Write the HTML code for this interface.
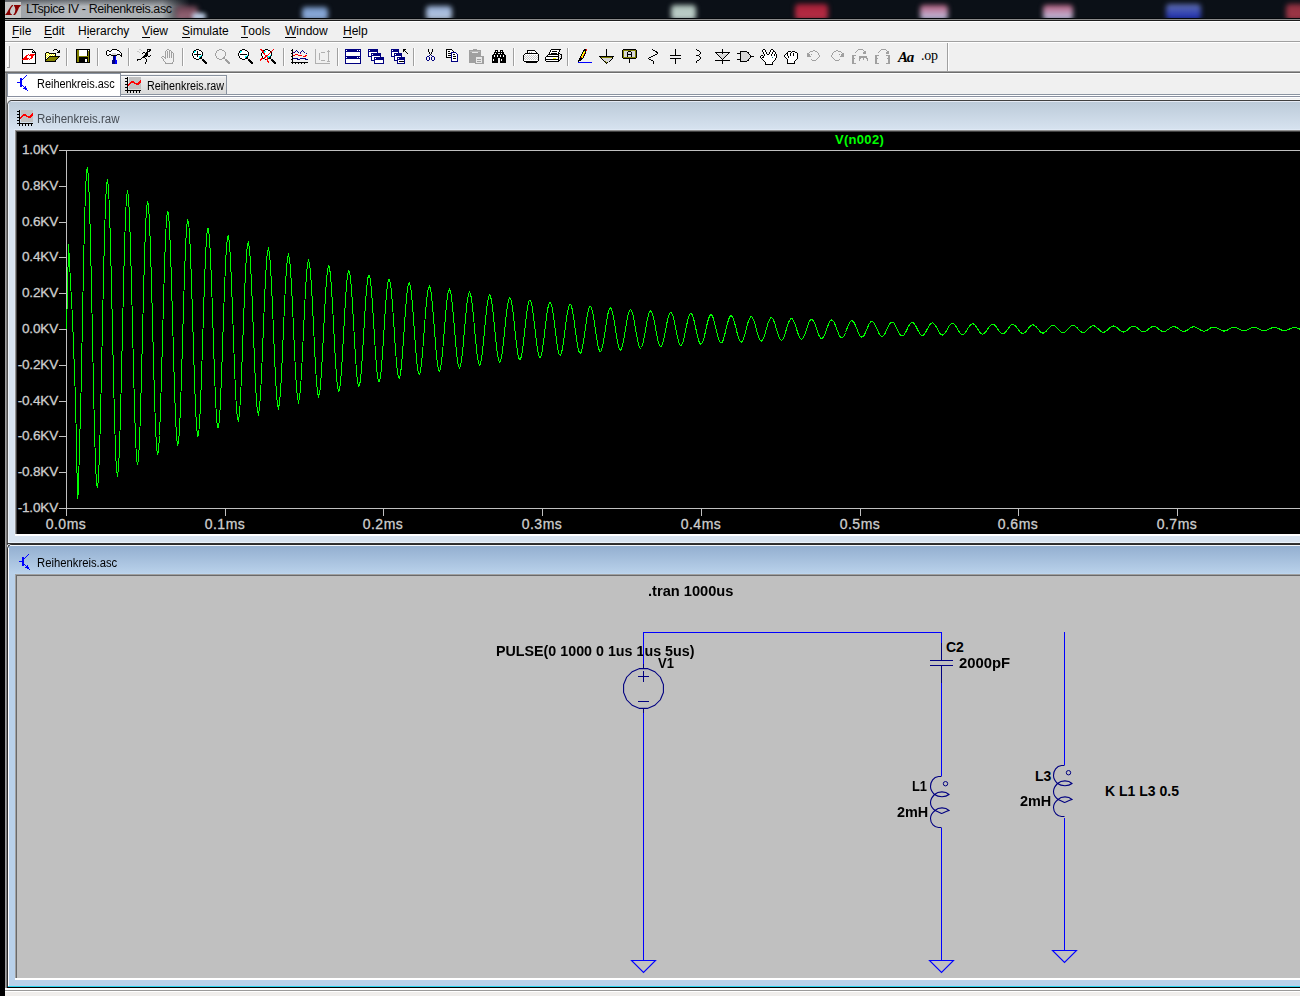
<!DOCTYPE html>
<html><head><meta charset="utf-8">
<style>
*{margin:0;padding:0;box-sizing:border-box}
html,body{width:1300px;height:996px;overflow:hidden}
body{position:relative;background:#f0f0f0;font-family:"Liberation Sans",sans-serif}
.a{position:absolute}
.menu{position:absolute;top:24px;font-size:12px;color:#000;white-space:pre}
.menu u{text-decoration:none;border-bottom:1px solid #000;display:inline-block;line-height:12px;height:13px}
.yl{position:absolute;left:0;width:58px;text-align:right;font-size:13.6px;letter-spacing:-0.2px;color:#d0d0d0;-webkit-text-stroke:0.3px #c8c8c8;line-height:15px;white-space:pre}
.xl{position:absolute;top:517px;width:80px;text-align:center;font-size:14px;letter-spacing:0.5px;color:#d0d0d0;-webkit-text-stroke:0.3px #c8c8c8;line-height:15px;white-space:pre}
.sch{position:absolute;font-weight:bold;font-size:14px;color:#000;line-height:16px;white-space:pre}
svg{position:absolute;overflow:visible}
</style></head><body>
<!-- left black strip -->
<div class="a" style="left:0;top:0;width:5px;height:996px;background:#000"></div>

<!-- title bar -->
<div class="a" style="left:5px;top:0;width:1295px;height:18px;background:#0b1017"></div>
<div class="a" style="left:5px;top:0;width:185px;height:18px;background:linear-gradient(rgba(11,16,23,0.45) 0%,rgba(11,16,23,0) 35%),linear-gradient(90deg,#9a9ea4 0%,#b4b8bc 35%,#a8acb0 85%,#0b1017 100%)"></div>
<div class="a" style="left:0;top:0;width:1300px;height:19px;overflow:hidden"><div class="a" style="left:176px;top:6px;width:22px;height:14px;background:linear-gradient(#6a4050,#a07080);border-radius:4px;filter:blur(2.5px)"></div><div class="a" style="left:192px;top:13px;width:14px;height:7px;background:#c0d0e8;border-radius:4px;filter:blur(2px)"></div><div class="a" style="left:302px;top:7px;width:26px;height:13px;background:linear-gradient(#7898c8,#90b0e0);border-radius:4px;filter:blur(2.5px)"></div><div class="a" style="left:426px;top:6px;width:26px;height:14px;background:linear-gradient(#98b0d8,#b8c8e0);border-radius:4px;filter:blur(2.5px)"></div><div class="a" style="left:671px;top:5px;width:25px;height:15px;background:linear-gradient(#b0c4bc,#c0d0cc);border-radius:4px;filter:blur(2.5px)"></div><div class="a" style="left:795px;top:4px;width:33px;height:16px;background:linear-gradient(#a82038,#b83048);border-radius:4px;filter:blur(2.5px)"></div><div class="a" style="left:920px;top:5px;width:28px;height:15px;background:linear-gradient(#b86080,#c0c8e8);border-radius:4px;filter:blur(2.5px)"></div><div class="a" style="left:1043px;top:5px;width:30px;height:15px;background:linear-gradient(#b86080,#c0c8e8);border-radius:4px;filter:blur(2.5px)"></div><div class="a" style="left:1166px;top:4px;width:35px;height:16px;background:linear-gradient(#6070b0,#1828b0);border-radius:4px;filter:blur(2.5px)"></div><div class="a" style="left:1286px;top:4px;width:19px;height:16px;background:linear-gradient(#903040,#a03848);border-radius:4px;filter:blur(2.5px)"></div></div><div class="a" style="left:5px;top:18px;width:1295px;height:1px;background:#03060a"></div>
<div class="a" style="left:5px;top:19px;width:1295px;height:1px;background:#8c8c8c"></div>
<div class="a" style="left:5px;top:20px;width:1295px;height:1px;background:#1c1c1c"></div>
<div class="a" style="left:5px;top:2px;width:16px;height:16px;background:#c8c8c8"></div>
<svg style="left:0;top:0" width="30" height="20"><path d="M5,15 L7,12.5 L9,9 L11,6 L12,5 L13.2,5 L13,5.8 L11.5,7.5 L10.2,10 L10,12 L10.7,13.8 L12,14.5 L12,15 Z M14,5 L21,5 L20.5,6 L19,7.5 L18,10 L16.5,13 L15,15 L13,15 L14,14 L15,12 L15.4,9.5 L14.8,7 L14,6 Z" fill="#880000"/></svg>
<div class="a" style="left:26px;top:1px;font-size:12.5px;letter-spacing:-0.4px;color:#0a0a0a;white-space:pre;line-height:16px">LTspice IV - Reihenkreis.asc</div>

<!-- menu bar -->
<div class="a" style="left:5px;top:21px;width:1295px;height:1px;background:#fff"></div>
<div class="a" style="left:5px;top:41px;width:1295px;height:1px;background:#a0a0a0"></div>
<div class="a" style="left:5px;top:42px;width:1295px;height:1px;background:#fff"></div>
<div class="menu" style="left:12px"><u>F</u>ile</div>
<div class="menu" style="left:44px"><u>E</u>dit</div>
<div class="menu" style="left:78px">H<u>i</u>erarchy</div>
<div class="menu" style="left:142px"><u>V</u>iew</div>
<div class="menu" style="left:182px"><u>S</u>imulate</div>
<div class="menu" style="left:241px"><u>T</u>ools</div>
<div class="menu" style="left:285px"><u>W</u>indow</div>
<div class="menu" style="left:343px"><u>H</u>elp</div>

<!-- toolbar -->
<svg style="left:0;top:0" width="1300" height="100"><rect x="7" y="46" width="1" height="21" fill="#fff"/><rect x="9" y="46" width="1" height="22" fill="#a0a0a0"/><rect x="7" y="67" width="3" height="1" fill="#a0a0a0"/><rect x="66" y="48" width="1" height="18" fill="#a0a0a0"/><rect x="67" y="48" width="1" height="18" fill="#fff"/><rect x="97" y="48" width="1" height="18" fill="#a0a0a0"/><rect x="98" y="48" width="1" height="18" fill="#fff"/><rect x="128" y="48" width="1" height="18" fill="#a0a0a0"/><rect x="129" y="48" width="1" height="18" fill="#fff"/><rect x="182" y="48" width="1" height="18" fill="#a0a0a0"/><rect x="183" y="48" width="1" height="18" fill="#fff"/><rect x="283" y="48" width="1" height="18" fill="#a0a0a0"/><rect x="284" y="48" width="1" height="18" fill="#fff"/><rect x="337" y="48" width="1" height="18" fill="#a0a0a0"/><rect x="338" y="48" width="1" height="18" fill="#fff"/><rect x="413" y="48" width="1" height="18" fill="#a0a0a0"/><rect x="414" y="48" width="1" height="18" fill="#fff"/><rect x="513" y="48" width="1" height="18" fill="#a0a0a0"/><rect x="514" y="48" width="1" height="18" fill="#fff"/><rect x="567" y="48" width="1" height="18" fill="#a0a0a0"/><rect x="568" y="48" width="1" height="18" fill="#fff"/><rect x="947" y="43" width="1" height="28" fill="#a0a0a0"/><rect x="948" y="43" width="1" height="28" fill="#fff"/><rect x="22" y="49" width="11" height="1" fill="#000"/><rect x="22" y="50" width="1" height="1" fill="#000"/><rect x="23" y="50" width="10" height="1" fill="#fff"/><rect x="33" y="50" width="1" height="1" fill="#000"/><rect x="22" y="51" width="1" height="1" fill="#000"/><rect x="23" y="51" width="9" height="1" fill="#fff"/><rect x="32" y="51" width="1" height="1" fill="#000"/><rect x="33" y="51" width="1" height="1" fill="#fff"/><rect x="34" y="51" width="1" height="1" fill="#000"/><rect x="22" y="52" width="1" height="1" fill="#000"/><rect x="23" y="52" width="9" height="1" fill="#fff"/><rect x="32" y="52" width="4" height="1" fill="#000"/><rect x="22" y="53" width="1" height="1" fill="#000"/><rect x="23" y="53" width="12" height="1" fill="#fff"/><rect x="35" y="53" width="1" height="1" fill="#000"/><rect x="22" y="54" width="1" height="1" fill="#000"/><rect x="23" y="54" width="5" height="1" fill="#fff"/><rect x="28" y="54" width="1" height="1" fill="#ff0000"/><rect x="29" y="54" width="1" height="1" fill="#fff"/><rect x="30" y="54" width="5" height="1" fill="#ff0000"/><rect x="35" y="54" width="1" height="1" fill="#000"/><rect x="22" y="55" width="1" height="1" fill="#000"/><rect x="23" y="55" width="3" height="1" fill="#fff"/><rect x="26" y="55" width="2" height="1" fill="#ff0000"/><rect x="28" y="55" width="1" height="1" fill="#fff"/><rect x="29" y="55" width="5" height="1" fill="#ff0000"/><rect x="34" y="55" width="1" height="1" fill="#fff"/><rect x="35" y="55" width="1" height="1" fill="#000"/><rect x="22" y="56" width="1" height="1" fill="#000"/><rect x="23" y="56" width="2" height="1" fill="#fff"/><rect x="25" y="56" width="2" height="1" fill="#ff0000"/><rect x="27" y="56" width="4" height="1" fill="#fff"/><rect x="31" y="56" width="2" height="1" fill="#ff0000"/><rect x="33" y="56" width="2" height="1" fill="#fff"/><rect x="35" y="56" width="1" height="1" fill="#000"/><rect x="22" y="57" width="1" height="1" fill="#000"/><rect x="23" y="57" width="1" height="1" fill="#fff"/><rect x="24" y="57" width="3" height="1" fill="#ff0000"/><rect x="27" y="57" width="4" height="1" fill="#fff"/><rect x="31" y="57" width="2" height="1" fill="#ff0000"/><rect x="33" y="57" width="2" height="1" fill="#fff"/><rect x="35" y="57" width="1" height="1" fill="#000"/><rect x="22" y="58" width="1" height="1" fill="#000"/><rect x="23" y="58" width="6" height="1" fill="#ff0000"/><rect x="29" y="58" width="1" height="1" fill="#fff"/><rect x="30" y="58" width="2" height="1" fill="#ff0000"/><rect x="32" y="58" width="3" height="1" fill="#fff"/><rect x="35" y="58" width="1" height="1" fill="#000"/><rect x="22" y="59" width="6" height="1" fill="#ff0000"/><rect x="28" y="59" width="1" height="1" fill="#fff"/><rect x="29" y="59" width="1" height="1" fill="#ff0000"/><rect x="30" y="59" width="5" height="1" fill="#fff"/><rect x="35" y="59" width="1" height="1" fill="#000"/><rect x="22" y="60" width="1" height="1" fill="#000"/><rect x="23" y="60" width="12" height="1" fill="#fff"/><rect x="35" y="60" width="1" height="1" fill="#000"/><rect x="22" y="61" width="1" height="1" fill="#000"/><rect x="23" y="61" width="12" height="1" fill="#fff"/><rect x="35" y="61" width="1" height="1" fill="#000"/><rect x="22" y="62" width="1" height="1" fill="#000"/><rect x="23" y="62" width="12" height="1" fill="#fff"/><rect x="35" y="62" width="1" height="1" fill="#000"/><rect x="22" y="63" width="14" height="1" fill="#000"/><rect x="54" y="49" width="3" height="1" fill="#000"/><rect x="53" y="50" width="1" height="1" fill="#000"/><rect x="57" y="50" width="1" height="1" fill="#000"/><rect x="59" y="50" width="1" height="1" fill="#000"/><rect x="58" y="51" width="2" height="1" fill="#000"/><rect x="46" y="52" width="3" height="1" fill="#000"/><rect x="57" y="52" width="3" height="1" fill="#000"/><rect x="45" y="53" width="1" height="1" fill="#000"/><rect x="46" y="53" width="1" height="1" fill="#ffff00"/><rect x="47" y="53" width="1" height="1" fill="#fff"/><rect x="48" y="53" width="1" height="1" fill="#ffff00"/><rect x="49" y="53" width="7" height="1" fill="#000"/><rect x="45" y="54" width="1" height="1" fill="#000"/><rect x="46" y="54" width="1" height="1" fill="#fff"/><rect x="47" y="54" width="1" height="1" fill="#ffff00"/><rect x="48" y="54" width="1" height="1" fill="#fff"/><rect x="49" y="54" width="1" height="1" fill="#ffff00"/><rect x="50" y="54" width="1" height="1" fill="#fff"/><rect x="51" y="54" width="1" height="1" fill="#ffff00"/><rect x="52" y="54" width="1" height="1" fill="#fff"/><rect x="53" y="54" width="1" height="1" fill="#ffff00"/><rect x="54" y="54" width="1" height="1" fill="#fff"/><rect x="55" y="54" width="1" height="1" fill="#000"/><rect x="45" y="55" width="1" height="1" fill="#000"/><rect x="46" y="55" width="1" height="1" fill="#ffff00"/><rect x="47" y="55" width="1" height="1" fill="#fff"/><rect x="48" y="55" width="1" height="1" fill="#ffff00"/><rect x="49" y="55" width="1" height="1" fill="#fff"/><rect x="50" y="55" width="1" height="1" fill="#ffff00"/><rect x="51" y="55" width="1" height="1" fill="#fff"/><rect x="52" y="55" width="1" height="1" fill="#ffff00"/><rect x="53" y="55" width="1" height="1" fill="#fff"/><rect x="54" y="55" width="1" height="1" fill="#ffff00"/><rect x="55" y="55" width="1" height="1" fill="#000"/><rect x="45" y="56" width="1" height="1" fill="#000"/><rect x="46" y="56" width="1" height="1" fill="#fff"/><rect x="47" y="56" width="1" height="1" fill="#ffff00"/><rect x="48" y="56" width="1" height="1" fill="#fff"/><rect x="49" y="56" width="11" height="1" fill="#000"/><rect x="45" y="57" width="1" height="1" fill="#000"/><rect x="46" y="57" width="1" height="1" fill="#ffff00"/><rect x="47" y="57" width="1" height="1" fill="#fff"/><rect x="48" y="57" width="1" height="1" fill="#000"/><rect x="49" y="57" width="9" height="1" fill="#808000"/><rect x="58" y="57" width="1" height="1" fill="#000"/><rect x="45" y="58" width="1" height="1" fill="#000"/><rect x="46" y="58" width="1" height="1" fill="#fff"/><rect x="47" y="58" width="1" height="1" fill="#000"/><rect x="48" y="58" width="9" height="1" fill="#808000"/><rect x="57" y="58" width="1" height="1" fill="#000"/><rect x="45" y="59" width="2" height="1" fill="#000"/><rect x="47" y="59" width="9" height="1" fill="#808000"/><rect x="56" y="59" width="1" height="1" fill="#000"/><rect x="45" y="60" width="1" height="1" fill="#000"/><rect x="46" y="60" width="9" height="1" fill="#808000"/><rect x="55" y="60" width="1" height="1" fill="#000"/><rect x="45" y="61" width="11" height="1" fill="#000"/><rect x="76" y="49" width="14" height="1" fill="#000"/><rect x="76" y="50" width="1" height="1" fill="#000"/><rect x="77" y="50" width="2" height="1" fill="#808000"/><rect x="79" y="50" width="8" height="1" fill="#fff"/><rect x="87" y="50" width="1" height="1" fill="#000"/><rect x="88" y="50" width="1" height="1" fill="#fff"/><rect x="89" y="50" width="1" height="1" fill="#000"/><rect x="76" y="51" width="1" height="1" fill="#000"/><rect x="77" y="51" width="2" height="1" fill="#808000"/><rect x="79" y="51" width="8" height="1" fill="#fff"/><rect x="87" y="51" width="1" height="1" fill="#000"/><rect x="88" y="51" width="1" height="1" fill="#808000"/><rect x="89" y="51" width="1" height="1" fill="#000"/><rect x="76" y="52" width="1" height="1" fill="#000"/><rect x="77" y="52" width="2" height="1" fill="#808000"/><rect x="79" y="52" width="8" height="1" fill="#fff"/><rect x="87" y="52" width="1" height="1" fill="#000"/><rect x="88" y="52" width="1" height="1" fill="#808000"/><rect x="89" y="52" width="1" height="1" fill="#000"/><rect x="76" y="53" width="1" height="1" fill="#000"/><rect x="77" y="53" width="2" height="1" fill="#808000"/><rect x="79" y="53" width="8" height="1" fill="#fff"/><rect x="87" y="53" width="1" height="1" fill="#000"/><rect x="88" y="53" width="1" height="1" fill="#808000"/><rect x="89" y="53" width="1" height="1" fill="#000"/><rect x="76" y="54" width="1" height="1" fill="#000"/><rect x="77" y="54" width="2" height="1" fill="#808000"/><rect x="79" y="54" width="8" height="1" fill="#fff"/><rect x="87" y="54" width="1" height="1" fill="#000"/><rect x="88" y="54" width="1" height="1" fill="#808000"/><rect x="89" y="54" width="1" height="1" fill="#000"/><rect x="76" y="55" width="1" height="1" fill="#000"/><rect x="77" y="55" width="2" height="1" fill="#808000"/><rect x="79" y="55" width="8" height="1" fill="#fff"/><rect x="87" y="55" width="1" height="1" fill="#000"/><rect x="88" y="55" width="1" height="1" fill="#808000"/><rect x="89" y="55" width="1" height="1" fill="#000"/><rect x="76" y="56" width="1" height="1" fill="#000"/><rect x="77" y="56" width="12" height="1" fill="#808000"/><rect x="89" y="56" width="1" height="1" fill="#000"/><rect x="76" y="57" width="1" height="1" fill="#000"/><rect x="77" y="57" width="2" height="1" fill="#808000"/><rect x="79" y="57" width="9" height="1" fill="#000"/><rect x="88" y="57" width="1" height="1" fill="#808000"/><rect x="89" y="57" width="1" height="1" fill="#000"/><rect x="76" y="58" width="1" height="1" fill="#000"/><rect x="77" y="58" width="2" height="1" fill="#808000"/><rect x="79" y="58" width="9" height="1" fill="#000"/><rect x="88" y="58" width="1" height="1" fill="#808000"/><rect x="89" y="58" width="1" height="1" fill="#000"/><rect x="76" y="59" width="1" height="1" fill="#000"/><rect x="77" y="59" width="2" height="1" fill="#808000"/><rect x="79" y="59" width="6" height="1" fill="#000"/><rect x="85" y="59" width="2" height="1" fill="#fff"/><rect x="87" y="59" width="1" height="1" fill="#000"/><rect x="88" y="59" width="1" height="1" fill="#808000"/><rect x="89" y="59" width="1" height="1" fill="#000"/><rect x="76" y="60" width="1" height="1" fill="#000"/><rect x="77" y="60" width="2" height="1" fill="#808000"/><rect x="79" y="60" width="6" height="1" fill="#000"/><rect x="85" y="60" width="2" height="1" fill="#fff"/><rect x="87" y="60" width="1" height="1" fill="#000"/><rect x="88" y="60" width="1" height="1" fill="#808000"/><rect x="89" y="60" width="1" height="1" fill="#000"/><rect x="76" y="61" width="1" height="1" fill="#000"/><rect x="77" y="61" width="2" height="1" fill="#808000"/><rect x="79" y="61" width="6" height="1" fill="#000"/><rect x="85" y="61" width="2" height="1" fill="#fff"/><rect x="87" y="61" width="1" height="1" fill="#000"/><rect x="88" y="61" width="1" height="1" fill="#808000"/><rect x="89" y="61" width="1" height="1" fill="#000"/><rect x="76" y="62" width="14" height="1" fill="#000"/><rect x="112" y="49" width="5" height="1" fill="#000"/><rect x="107" y="50" width="2" height="1" fill="#000"/><rect x="111" y="50" width="1" height="1" fill="#000"/><rect x="112" y="50" width="5" height="1" fill="#fff"/><rect x="117" y="50" width="2" height="1" fill="#000"/><rect x="106" y="51" width="1" height="1" fill="#000"/><rect x="107" y="51" width="2" height="1" fill="#fff"/><rect x="109" y="51" width="2" height="1" fill="#000"/><rect x="111" y="51" width="8" height="1" fill="#fff"/><rect x="119" y="51" width="1" height="1" fill="#000"/><rect x="106" y="52" width="1" height="1" fill="#000"/><rect x="107" y="52" width="13" height="1" fill="#fff"/><rect x="120" y="52" width="1" height="1" fill="#000"/><rect x="106" y="53" width="1" height="1" fill="#000"/><rect x="107" y="53" width="5" height="1" fill="#fff"/><rect x="112" y="53" width="4" height="1" fill="#d8d8d8"/><rect x="116" y="53" width="5" height="1" fill="#fff"/><rect x="121" y="53" width="1" height="1" fill="#000"/><rect x="106" y="54" width="1" height="1" fill="#000"/><rect x="107" y="54" width="2" height="1" fill="#fff"/><rect x="109" y="54" width="2" height="1" fill="#000"/><rect x="111" y="54" width="6" height="1" fill="#d8d8d8"/><rect x="117" y="54" width="3" height="1" fill="#000"/><rect x="120" y="54" width="1" height="1" fill="#fff"/><rect x="121" y="54" width="1" height="1" fill="#000"/><rect x="107" y="55" width="2" height="1" fill="#000"/><rect x="111" y="55" width="6" height="1" fill="#000"/><rect x="120" y="55" width="2" height="1" fill="#000"/><rect x="113" y="56" width="2" height="1" fill="#000080"/><rect x="115" y="56" width="1" height="1" fill="#0000ff"/><rect x="121" y="56" width="1" height="1" fill="#000"/><rect x="113" y="57" width="2" height="1" fill="#000080"/><rect x="115" y="57" width="1" height="1" fill="#0000ff"/><rect x="113" y="58" width="2" height="1" fill="#000080"/><rect x="115" y="58" width="1" height="1" fill="#0000ff"/><rect x="113" y="59" width="2" height="1" fill="#000080"/><rect x="115" y="59" width="1" height="1" fill="#0000ff"/><rect x="112" y="60" width="3" height="1" fill="#000080"/><rect x="115" y="60" width="2" height="1" fill="#0000ff"/><rect x="112" y="61" width="3" height="1" fill="#000080"/><rect x="115" y="61" width="2" height="1" fill="#0000ff"/><rect x="112" y="62" width="3" height="1" fill="#000080"/><rect x="115" y="62" width="2" height="1" fill="#0000ff"/><rect x="112" y="63" width="3" height="1" fill="#000080"/><rect x="115" y="63" width="2" height="1" fill="#0000ff"/><rect x="139" y="49" width="2" height="1" fill="#c8c8c8"/><rect x="147" y="49" width="4" height="1" fill="#000"/><rect x="141" y="50" width="1" height="1" fill="#c8c8c8"/><rect x="147" y="50" width="1" height="1" fill="#000"/><rect x="148" y="50" width="1" height="1" fill="#fff"/><rect x="149" y="50" width="2" height="1" fill="#000"/><rect x="137" y="51" width="2" height="1" fill="#c8c8c8"/><rect x="147" y="51" width="3" height="1" fill="#000"/><rect x="139" y="52" width="1" height="1" fill="#c8c8c8"/><rect x="143" y="52" width="2" height="1" fill="#000"/><rect x="146" y="52" width="2" height="1" fill="#000"/><rect x="142" y="53" width="1" height="1" fill="#000"/><rect x="145" y="53" width="3" height="1" fill="#000"/><rect x="145" y="54" width="3" height="1" fill="#000"/><rect x="144" y="55" width="4" height="1" fill="#000"/><rect x="150" y="55" width="1" height="1" fill="#000"/><rect x="143" y="56" width="4" height="1" fill="#000"/><rect x="148" y="56" width="2" height="1" fill="#000"/><rect x="142" y="57" width="3" height="1" fill="#000"/><rect x="141" y="58" width="1" height="1" fill="#000"/><rect x="145" y="58" width="1" height="1" fill="#000"/><rect x="137" y="59" width="4" height="1" fill="#000"/><rect x="146" y="59" width="1" height="1" fill="#000"/><rect x="137" y="60" width="1" height="1" fill="#000"/><rect x="146" y="60" width="1" height="1" fill="#000"/><rect x="146" y="61" width="1" height="1" fill="#000"/><rect x="145" y="62" width="1" height="1" fill="#000"/><rect x="145" y="63" width="1" height="1" fill="#000"/><rect x="167" y="49" width="2" height="1" fill="#a0a0a0"/><rect x="166" y="50" width="1" height="1" fill="#a0a0a0"/><rect x="169" y="50" width="2" height="1" fill="#a0a0a0"/><rect x="165" y="51" width="1" height="1" fill="#a0a0a0"/><rect x="167" y="51" width="1" height="1" fill="#a0a0a0"/><rect x="169" y="51" width="1" height="1" fill="#a0a0a0"/><rect x="171" y="51" width="1" height="1" fill="#a0a0a0"/><rect x="165" y="52" width="1" height="1" fill="#a0a0a0"/><rect x="167" y="52" width="1" height="1" fill="#a0a0a0"/><rect x="169" y="52" width="1" height="1" fill="#a0a0a0"/><rect x="171" y="52" width="2" height="1" fill="#a0a0a0"/><rect x="165" y="53" width="1" height="1" fill="#a0a0a0"/><rect x="167" y="53" width="1" height="1" fill="#a0a0a0"/><rect x="169" y="53" width="1" height="1" fill="#a0a0a0"/><rect x="171" y="53" width="1" height="1" fill="#a0a0a0"/><rect x="173" y="53" width="1" height="1" fill="#a0a0a0"/><rect x="165" y="54" width="1" height="1" fill="#a0a0a0"/><rect x="167" y="54" width="1" height="1" fill="#a0a0a0"/><rect x="169" y="54" width="1" height="1" fill="#a0a0a0"/><rect x="171" y="54" width="1" height="1" fill="#a0a0a0"/><rect x="173" y="54" width="1" height="1" fill="#a0a0a0"/><rect x="165" y="55" width="1" height="1" fill="#a0a0a0"/><rect x="167" y="55" width="1" height="1" fill="#a0a0a0"/><rect x="169" y="55" width="1" height="1" fill="#a0a0a0"/><rect x="171" y="55" width="1" height="1" fill="#a0a0a0"/><rect x="173" y="55" width="1" height="1" fill="#a0a0a0"/><rect x="162" y="56" width="2" height="1" fill="#a0a0a0"/><rect x="165" y="56" width="1" height="1" fill="#a0a0a0"/><rect x="167" y="56" width="1" height="1" fill="#a0a0a0"/><rect x="169" y="56" width="1" height="1" fill="#a0a0a0"/><rect x="171" y="56" width="1" height="1" fill="#a0a0a0"/><rect x="173" y="56" width="1" height="1" fill="#a0a0a0"/><rect x="161" y="57" width="1" height="1" fill="#a0a0a0"/><rect x="164" y="57" width="2" height="1" fill="#a0a0a0"/><rect x="167" y="57" width="1" height="1" fill="#a0a0a0"/><rect x="169" y="57" width="1" height="1" fill="#a0a0a0"/><rect x="171" y="57" width="1" height="1" fill="#a0a0a0"/><rect x="173" y="57" width="1" height="1" fill="#a0a0a0"/><rect x="162" y="58" width="1" height="1" fill="#a0a0a0"/><rect x="165" y="58" width="1" height="1" fill="#a0a0a0"/><rect x="173" y="58" width="1" height="1" fill="#a0a0a0"/><rect x="163" y="59" width="1" height="1" fill="#a0a0a0"/><rect x="173" y="59" width="1" height="1" fill="#a0a0a0"/><rect x="163" y="60" width="1" height="1" fill="#a0a0a0"/><rect x="173" y="60" width="1" height="1" fill="#a0a0a0"/><rect x="164" y="61" width="1" height="1" fill="#a0a0a0"/><rect x="173" y="61" width="1" height="1" fill="#a0a0a0"/><rect x="165" y="62" width="1" height="1" fill="#a0a0a0"/><rect x="172" y="62" width="1" height="1" fill="#a0a0a0"/><rect x="165" y="63" width="8" height="1" fill="#a0a0a0"/><rect x="196" y="49" width="3" height="1" fill="#000"/><rect x="194" y="50" width="2" height="1" fill="#000"/><rect x="196" y="50" width="3" height="1" fill="#fff"/><rect x="199" y="50" width="2" height="1" fill="#000"/><rect x="193" y="51" width="1" height="1" fill="#000"/><rect x="194" y="51" width="2" height="1" fill="#00ffff"/><rect x="196" y="51" width="1" height="1" fill="#fff"/><rect x="197" y="51" width="1" height="1" fill="#000"/><rect x="198" y="51" width="3" height="1" fill="#fff"/><rect x="201" y="51" width="1" height="1" fill="#000"/><rect x="193" y="52" width="1" height="1" fill="#000"/><rect x="194" y="52" width="1" height="1" fill="#00ffff"/><rect x="195" y="52" width="2" height="1" fill="#fff"/><rect x="197" y="52" width="1" height="1" fill="#000"/><rect x="198" y="52" width="4" height="1" fill="#fff"/><rect x="202" y="52" width="1" height="1" fill="#000"/><rect x="192" y="53" width="1" height="1" fill="#000"/><rect x="193" y="53" width="4" height="1" fill="#fff"/><rect x="197" y="53" width="1" height="1" fill="#000"/><rect x="198" y="53" width="4" height="1" fill="#fff"/><rect x="202" y="53" width="1" height="1" fill="#000"/><rect x="192" y="54" width="1" height="1" fill="#000"/><rect x="193" y="54" width="1" height="1" fill="#fff"/><rect x="194" y="54" width="7" height="1" fill="#000"/><rect x="201" y="54" width="1" height="1" fill="#fff"/><rect x="202" y="54" width="1" height="1" fill="#000"/><rect x="192" y="55" width="1" height="1" fill="#000"/><rect x="193" y="55" width="4" height="1" fill="#fff"/><rect x="197" y="55" width="1" height="1" fill="#000"/><rect x="198" y="55" width="3" height="1" fill="#fff"/><rect x="201" y="55" width="1" height="1" fill="#00ffff"/><rect x="202" y="55" width="1" height="1" fill="#000"/><rect x="193" y="56" width="1" height="1" fill="#000"/><rect x="194" y="56" width="3" height="1" fill="#fff"/><rect x="197" y="56" width="1" height="1" fill="#000"/><rect x="198" y="56" width="1" height="1" fill="#fff"/><rect x="199" y="56" width="2" height="1" fill="#00ffff"/><rect x="201" y="56" width="1" height="1" fill="#000"/><rect x="193" y="57" width="1" height="1" fill="#000"/><rect x="194" y="57" width="5" height="1" fill="#fff"/><rect x="199" y="57" width="1" height="1" fill="#00ffff"/><rect x="200" y="57" width="2" height="1" fill="#000"/><rect x="194" y="58" width="2" height="1" fill="#000"/><rect x="196" y="58" width="3" height="1" fill="#fff"/><rect x="199" y="58" width="3" height="1" fill="#000"/><rect x="196" y="59" width="3" height="1" fill="#000"/><rect x="202" y="59" width="2" height="1" fill="#000"/><rect x="202" y="60" width="3" height="1" fill="#000"/><rect x="203" y="61" width="3" height="1" fill="#000"/><rect x="204" y="62" width="3" height="1" fill="#000"/><rect x="205" y="63" width="2" height="1" fill="#000"/><rect x="219" y="49" width="3" height="1" fill="#a0a0a0"/><rect x="217" y="50" width="2" height="1" fill="#a0a0a0"/><rect x="222" y="50" width="2" height="1" fill="#a0a0a0"/><rect x="216" y="51" width="1" height="1" fill="#a0a0a0"/><rect x="224" y="51" width="1" height="1" fill="#a0a0a0"/><rect x="216" y="52" width="1" height="1" fill="#a0a0a0"/><rect x="225" y="52" width="1" height="1" fill="#a0a0a0"/><rect x="215" y="53" width="1" height="1" fill="#a0a0a0"/><rect x="225" y="53" width="1" height="1" fill="#a0a0a0"/><rect x="215" y="54" width="1" height="1" fill="#a0a0a0"/><rect x="225" y="54" width="1" height="1" fill="#a0a0a0"/><rect x="215" y="55" width="1" height="1" fill="#a0a0a0"/><rect x="225" y="55" width="1" height="1" fill="#a0a0a0"/><rect x="216" y="56" width="1" height="1" fill="#a0a0a0"/><rect x="224" y="56" width="1" height="1" fill="#a0a0a0"/><rect x="216" y="57" width="1" height="1" fill="#a0a0a0"/><rect x="223" y="57" width="2" height="1" fill="#a0a0a0"/><rect x="217" y="58" width="2" height="1" fill="#a0a0a0"/><rect x="222" y="58" width="3" height="1" fill="#a0a0a0"/><rect x="219" y="59" width="3" height="1" fill="#a0a0a0"/><rect x="225" y="59" width="2" height="1" fill="#a0a0a0"/><rect x="225" y="60" width="3" height="1" fill="#a0a0a0"/><rect x="226" y="61" width="3" height="1" fill="#a0a0a0"/><rect x="227" y="62" width="3" height="1" fill="#a0a0a0"/><rect x="228" y="63" width="2" height="1" fill="#a0a0a0"/><rect x="242" y="49" width="3" height="1" fill="#000"/><rect x="240" y="50" width="2" height="1" fill="#000"/><rect x="242" y="50" width="3" height="1" fill="#fff"/><rect x="245" y="50" width="2" height="1" fill="#000"/><rect x="239" y="51" width="1" height="1" fill="#000"/><rect x="240" y="51" width="2" height="1" fill="#00ffff"/><rect x="242" y="51" width="5" height="1" fill="#fff"/><rect x="247" y="51" width="1" height="1" fill="#000"/><rect x="239" y="52" width="1" height="1" fill="#000"/><rect x="240" y="52" width="1" height="1" fill="#00ffff"/><rect x="241" y="52" width="7" height="1" fill="#fff"/><rect x="248" y="52" width="1" height="1" fill="#000"/><rect x="238" y="53" width="1" height="1" fill="#000"/><rect x="239" y="53" width="9" height="1" fill="#fff"/><rect x="248" y="53" width="1" height="1" fill="#000"/><rect x="238" y="54" width="1" height="1" fill="#000"/><rect x="239" y="54" width="1" height="1" fill="#fff"/><rect x="240" y="54" width="7" height="1" fill="#000"/><rect x="247" y="54" width="1" height="1" fill="#fff"/><rect x="248" y="54" width="1" height="1" fill="#000"/><rect x="238" y="55" width="1" height="1" fill="#000"/><rect x="239" y="55" width="8" height="1" fill="#fff"/><rect x="247" y="55" width="1" height="1" fill="#00ffff"/><rect x="248" y="55" width="1" height="1" fill="#000"/><rect x="239" y="56" width="1" height="1" fill="#000"/><rect x="240" y="56" width="5" height="1" fill="#fff"/><rect x="245" y="56" width="2" height="1" fill="#00ffff"/><rect x="247" y="56" width="1" height="1" fill="#000"/><rect x="239" y="57" width="1" height="1" fill="#000"/><rect x="240" y="57" width="5" height="1" fill="#fff"/><rect x="245" y="57" width="1" height="1" fill="#00ffff"/><rect x="246" y="57" width="2" height="1" fill="#000"/><rect x="240" y="58" width="2" height="1" fill="#000"/><rect x="242" y="58" width="3" height="1" fill="#fff"/><rect x="245" y="58" width="3" height="1" fill="#000"/><rect x="242" y="59" width="3" height="1" fill="#000"/><rect x="248" y="59" width="2" height="1" fill="#000"/><rect x="248" y="60" width="3" height="1" fill="#000"/><rect x="249" y="61" width="3" height="1" fill="#000"/><rect x="250" y="62" width="3" height="1" fill="#000"/><rect x="251" y="63" width="2" height="1" fill="#000"/><rect x="260" y="49" width="2" height="1" fill="#ff0000"/><rect x="265" y="49" width="3" height="1" fill="#000"/><rect x="273" y="49" width="1" height="1" fill="#ff0000"/><rect x="261" y="50" width="2" height="1" fill="#ff0000"/><rect x="263" y="50" width="2" height="1" fill="#000"/><rect x="265" y="50" width="3" height="1" fill="#fff"/><rect x="268" y="50" width="2" height="1" fill="#000"/><rect x="272" y="50" width="1" height="1" fill="#ff0000"/><rect x="262" y="51" width="2" height="1" fill="#ff0000"/><rect x="264" y="51" width="2" height="1" fill="#00ffff"/><rect x="266" y="51" width="4" height="1" fill="#fff"/><rect x="270" y="51" width="1" height="1" fill="#000"/><rect x="271" y="51" width="1" height="1" fill="#ff0000"/><rect x="262" y="52" width="1" height="1" fill="#000"/><rect x="263" y="52" width="1" height="1" fill="#ff0000"/><rect x="264" y="52" width="1" height="1" fill="#00ffff"/><rect x="265" y="52" width="5" height="1" fill="#fff"/><rect x="270" y="52" width="1" height="1" fill="#ff0000"/><rect x="271" y="52" width="1" height="1" fill="#000"/><rect x="261" y="53" width="1" height="1" fill="#000"/><rect x="262" y="53" width="1" height="1" fill="#fff"/><rect x="263" y="53" width="2" height="1" fill="#ff0000"/><rect x="265" y="53" width="4" height="1" fill="#fff"/><rect x="269" y="53" width="1" height="1" fill="#ff0000"/><rect x="270" y="53" width="1" height="1" fill="#fff"/><rect x="271" y="53" width="1" height="1" fill="#000"/><rect x="261" y="54" width="1" height="1" fill="#000"/><rect x="262" y="54" width="2" height="1" fill="#fff"/><rect x="264" y="54" width="1" height="1" fill="#ff0000"/><rect x="265" y="54" width="3" height="1" fill="#fff"/><rect x="268" y="54" width="1" height="1" fill="#ff0000"/><rect x="269" y="54" width="2" height="1" fill="#fff"/><rect x="271" y="54" width="1" height="1" fill="#000"/><rect x="261" y="55" width="1" height="1" fill="#000"/><rect x="262" y="55" width="3" height="1" fill="#fff"/><rect x="265" y="55" width="3" height="1" fill="#ff0000"/><rect x="268" y="55" width="2" height="1" fill="#fff"/><rect x="270" y="55" width="1" height="1" fill="#00ffff"/><rect x="271" y="55" width="1" height="1" fill="#000"/><rect x="262" y="56" width="1" height="1" fill="#000"/><rect x="263" y="56" width="2" height="1" fill="#fff"/><rect x="265" y="56" width="2" height="1" fill="#ff0000"/><rect x="267" y="56" width="3" height="1" fill="#00ffff"/><rect x="270" y="56" width="1" height="1" fill="#000"/><rect x="262" y="57" width="1" height="1" fill="#000"/><rect x="263" y="57" width="1" height="1" fill="#fff"/><rect x="264" y="57" width="2" height="1" fill="#ff0000"/><rect x="266" y="57" width="1" height="1" fill="#fff"/><rect x="267" y="57" width="1" height="1" fill="#ff0000"/><rect x="268" y="57" width="1" height="1" fill="#00ffff"/><rect x="269" y="57" width="2" height="1" fill="#000"/><rect x="261" y="58" width="2" height="1" fill="#ff0000"/><rect x="263" y="58" width="1" height="1" fill="#000"/><rect x="264" y="58" width="1" height="1" fill="#ff0000"/><rect x="265" y="58" width="2" height="1" fill="#fff"/><rect x="267" y="58" width="1" height="1" fill="#ff0000"/><rect x="268" y="58" width="3" height="1" fill="#000"/><rect x="260" y="59" width="2" height="1" fill="#ff0000"/><rect x="265" y="59" width="1" height="1" fill="#000"/><rect x="266" y="59" width="2" height="1" fill="#ff0000"/><rect x="271" y="59" width="2" height="1" fill="#000"/><rect x="260" y="60" width="1" height="1" fill="#ff0000"/><rect x="267" y="60" width="1" height="1" fill="#ff0000"/><rect x="271" y="60" width="3" height="1" fill="#000"/><rect x="267" y="61" width="2" height="1" fill="#ff0000"/><rect x="272" y="61" width="3" height="1" fill="#000"/><rect x="268" y="62" width="1" height="1" fill="#ff0000"/><rect x="273" y="62" width="3" height="1" fill="#000"/><rect x="274" y="63" width="2" height="1" fill="#000"/><rect x="292" y="49" width="1" height="1" fill="#000"/><rect x="292" y="50" width="1" height="1" fill="#000"/><rect x="296" y="50" width="1" height="1" fill="#000080"/><rect x="302" y="50" width="1" height="1" fill="#000080"/><rect x="292" y="51" width="1" height="1" fill="#000"/><rect x="295" y="51" width="1" height="1" fill="#000080"/><rect x="297" y="51" width="1" height="1" fill="#000080"/><rect x="301" y="51" width="1" height="1" fill="#000080"/><rect x="303" y="51" width="1" height="1" fill="#000080"/><rect x="292" y="52" width="1" height="1" fill="#000"/><rect x="293" y="52" width="1" height="1" fill="#800080"/><rect x="294" y="52" width="1" height="1" fill="#000080"/><rect x="298" y="52" width="1" height="1" fill="#000080"/><rect x="300" y="52" width="1" height="1" fill="#000080"/><rect x="304" y="52" width="1" height="1" fill="#000080"/><rect x="292" y="53" width="1" height="1" fill="#000"/><rect x="300" y="53" width="1" height="1" fill="#800080"/><rect x="306" y="53" width="1" height="1" fill="#000080"/><rect x="292" y="54" width="1" height="1" fill="#000"/><rect x="295" y="54" width="3" height="1" fill="#ff0000"/><rect x="292" y="55" width="1" height="1" fill="#000"/><rect x="293" y="55" width="2" height="1" fill="#ff0000"/><rect x="298" y="55" width="4" height="1" fill="#ff0000"/><rect x="305" y="55" width="2" height="1" fill="#ff0000"/><rect x="292" y="56" width="1" height="1" fill="#000"/><rect x="303" y="56" width="3" height="1" fill="#ff0000"/><rect x="292" y="57" width="1" height="1" fill="#000"/><rect x="292" y="58" width="1" height="1" fill="#000"/><rect x="293" y="58" width="5" height="1" fill="#000080"/><rect x="300" y="58" width="6" height="1" fill="#000080"/><rect x="292" y="59" width="1" height="1" fill="#000"/><rect x="297" y="59" width="3" height="1" fill="#000080"/><rect x="305" y="59" width="3" height="1" fill="#000080"/><rect x="292" y="60" width="1" height="1" fill="#000"/><rect x="292" y="61" width="1" height="1" fill="#000"/><rect x="292" y="62" width="16" height="1" fill="#000"/><rect x="292" y="63" width="1" height="1" fill="#000"/><rect x="295" y="63" width="1" height="1" fill="#000"/><rect x="298" y="63" width="1" height="1" fill="#000"/><rect x="301" y="63" width="1" height="1" fill="#000"/><rect x="304" y="63" width="1" height="1" fill="#000"/><rect x="291" y="50" width="1" height="1" fill="#000"/><rect x="291" y="53" width="1" height="1" fill="#000"/><rect x="291" y="56" width="1" height="1" fill="#000"/><rect x="291" y="59" width="1" height="1" fill="#000"/><rect x="291" y="62" width="1" height="1" fill="#000"/><g fill="none" stroke="#b0b0b0" shape-rendering="crispEdges"><path d="M315.5,49 V63.5 H330"/><path d="M320.5,52.5 H325 M320.5,60.5 H325 M319.5,53 V60 M328.5,50 V62 M327,51.5 H330 M327,61.5 H330"/></g><rect x="345" y="49" width="16" height="15" fill="#000080"/><rect x="346" y="52" width="14" height="4" fill="#fff"/><rect x="346" y="59" width="14" height="4" fill="#fff"/><rect x="346" y="50" width="1" height="1" fill="#fff"/><rect x="357" y="50" width="1" height="1" fill="#fff"/><rect x="359" y="50" width="1" height="1" fill="#fff"/><rect x="346" y="57" width="1" height="1" fill="#fff"/><rect x="357" y="57" width="1" height="1" fill="#fff"/><rect x="359" y="57" width="1" height="1" fill="#fff"/><rect x="368" y="49" width="10" height="8" fill="#000080"/><rect x="369" y="52" width="8" height="4" fill="#fff"/><rect x="369" y="50" width="1" height="1" fill="#fff"/><rect x="371" y="53" width="10" height="8" fill="#000080"/><rect x="372" y="56" width="8" height="4" fill="#fff"/><rect x="372" y="54" width="1" height="1" fill="#fff"/><rect x="374" y="57" width="10" height="7" fill="#000080"/><rect x="375" y="60" width="8" height="3" fill="#fff"/><rect x="375" y="58" width="1" height="1" fill="#fff"/><rect x="391" y="49" width="8" height="8" fill="#000080"/><rect x="392" y="52" width="6" height="4" fill="#fff"/><rect x="392" y="50" width="1" height="1" fill="#fff"/><rect x="394" y="53" width="8" height="8" fill="#000080"/><rect x="395" y="56" width="6" height="4" fill="#fff"/><rect x="395" y="54" width="1" height="1" fill="#fff"/><rect x="397" y="57" width="8" height="7" fill="#000080"/><rect x="398" y="60" width="6" height="3" fill="#fff"/><rect x="398" y="58" width="1" height="1" fill="#fff"/><rect x="399" y="61" width="5" height="1" fill="#000"/><rect x="403" y="49" width="3" height="1" fill="#000"/><rect x="403" y="50" width="2" height="1" fill="#000"/><rect x="403" y="51" width="1" height="1" fill="#000"/><rect x="405" y="51" width="1" height="1" fill="#000"/><rect x="406" y="52" width="1" height="1" fill="#000"/><rect x="407" y="53" width="1" height="1" fill="#000"/><rect x="428" y="49" width="1" height="1" fill="#000"/><rect x="432" y="49" width="1" height="1" fill="#000"/><rect x="428" y="50" width="1" height="1" fill="#000"/><rect x="432" y="50" width="1" height="1" fill="#000"/><rect x="428" y="51" width="1" height="1" fill="#000"/><rect x="432" y="51" width="1" height="1" fill="#000"/><rect x="429" y="52" width="1" height="1" fill="#000"/><rect x="431" y="52" width="1" height="1" fill="#000"/><rect x="429" y="53" width="1" height="1" fill="#000"/><rect x="431" y="53" width="1" height="1" fill="#000"/><rect x="430" y="54" width="1" height="1" fill="#000"/><rect x="429" y="55" width="1" height="1" fill="#000080"/><rect x="431" y="55" width="1" height="1" fill="#000080"/><rect x="427" y="56" width="2" height="1" fill="#000080"/><rect x="432" y="56" width="2" height="1" fill="#000080"/><rect x="426" y="57" width="1" height="1" fill="#000080"/><rect x="429" y="57" width="1" height="1" fill="#000080"/><rect x="431" y="57" width="1" height="1" fill="#000080"/><rect x="434" y="57" width="1" height="1" fill="#000080"/><rect x="426" y="58" width="1" height="1" fill="#000080"/><rect x="429" y="58" width="1" height="1" fill="#000080"/><rect x="431" y="58" width="1" height="1" fill="#000080"/><rect x="434" y="58" width="1" height="1" fill="#000080"/><rect x="426" y="59" width="1" height="1" fill="#000080"/><rect x="429" y="59" width="1" height="1" fill="#000080"/><rect x="431" y="59" width="1" height="1" fill="#000080"/><rect x="434" y="59" width="1" height="1" fill="#000080"/><rect x="427" y="60" width="2" height="1" fill="#000080"/><rect x="432" y="60" width="2" height="1" fill="#000080"/><rect x="446" y="49" width="6" height="1" fill="#000"/><rect x="446" y="50" width="1" height="1" fill="#000"/><rect x="447" y="50" width="5" height="1" fill="#fff"/><rect x="452" y="50" width="1" height="1" fill="#000"/><rect x="446" y="51" width="1" height="1" fill="#000"/><rect x="447" y="51" width="1" height="1" fill="#fff"/><rect x="448" y="51" width="2" height="1" fill="#000"/><rect x="450" y="51" width="3" height="1" fill="#fff"/><rect x="453" y="51" width="1" height="1" fill="#000"/><rect x="446" y="52" width="1" height="1" fill="#000"/><rect x="447" y="52" width="4" height="1" fill="#fff"/><rect x="451" y="52" width="5" height="1" fill="#000080"/><rect x="446" y="53" width="1" height="1" fill="#000"/><rect x="447" y="53" width="1" height="1" fill="#fff"/><rect x="448" y="53" width="3" height="1" fill="#000"/><rect x="451" y="53" width="1" height="1" fill="#000080"/><rect x="452" y="53" width="4" height="1" fill="#fff"/><rect x="456" y="53" width="1" height="1" fill="#000080"/><rect x="446" y="54" width="1" height="1" fill="#000"/><rect x="447" y="54" width="4" height="1" fill="#fff"/><rect x="451" y="54" width="1" height="1" fill="#000080"/><rect x="452" y="54" width="1" height="1" fill="#fff"/><rect x="453" y="54" width="2" height="1" fill="#000"/><rect x="455" y="54" width="2" height="1" fill="#fff"/><rect x="457" y="54" width="1" height="1" fill="#000080"/><rect x="446" y="55" width="1" height="1" fill="#000"/><rect x="447" y="55" width="1" height="1" fill="#fff"/><rect x="448" y="55" width="3" height="1" fill="#000"/><rect x="451" y="55" width="1" height="1" fill="#000080"/><rect x="452" y="55" width="5" height="1" fill="#fff"/><rect x="457" y="55" width="1" height="1" fill="#000080"/><rect x="446" y="56" width="1" height="1" fill="#000"/><rect x="447" y="56" width="4" height="1" fill="#fff"/><rect x="451" y="56" width="1" height="1" fill="#000080"/><rect x="452" y="56" width="1" height="1" fill="#fff"/><rect x="453" y="56" width="3" height="1" fill="#000"/><rect x="456" y="56" width="1" height="1" fill="#fff"/><rect x="457" y="56" width="1" height="1" fill="#000080"/><rect x="446" y="57" width="5" height="1" fill="#000"/><rect x="451" y="57" width="1" height="1" fill="#000080"/><rect x="452" y="57" width="5" height="1" fill="#fff"/><rect x="457" y="57" width="1" height="1" fill="#000080"/><rect x="451" y="58" width="1" height="1" fill="#000080"/><rect x="452" y="58" width="1" height="1" fill="#fff"/><rect x="453" y="58" width="3" height="1" fill="#000"/><rect x="456" y="58" width="1" height="1" fill="#fff"/><rect x="457" y="58" width="1" height="1" fill="#000080"/><rect x="451" y="59" width="1" height="1" fill="#000080"/><rect x="452" y="59" width="5" height="1" fill="#fff"/><rect x="457" y="59" width="1" height="1" fill="#000080"/><rect x="451" y="60" width="1" height="1" fill="#000080"/><rect x="452" y="60" width="5" height="1" fill="#fff"/><rect x="457" y="60" width="1" height="1" fill="#000080"/><rect x="451" y="61" width="7" height="1" fill="#000080"/><rect x="473" y="49" width="4" height="2" fill="#a0a0a0"/><rect x="469" y="50" width="12" height="13" fill="#a0a0a0"/><rect x="470" y="51" width="10" height="1" fill="#b8b8b8"/><rect x="472" y="52" width="6" height="1" fill="#e8e8e8"/><rect x="475" y="56" width="9" height="8" fill="#a0a0a0"/><rect x="476" y="57" width="6" height="6" fill="#e8e8e8"/><rect x="477" y="59" width="4" height="1" fill="#a0a0a0"/><rect x="477" y="61" width="4" height="1" fill="#a0a0a0"/><rect x="495" y="50" width="3" height="1" fill="#000"/><rect x="500" y="50" width="3" height="1" fill="#000"/><rect x="495" y="51" width="1" height="1" fill="#000"/><rect x="496" y="51" width="1" height="1" fill="#fff"/><rect x="497" y="51" width="1" height="1" fill="#000"/><rect x="500" y="51" width="1" height="1" fill="#000"/><rect x="501" y="51" width="1" height="1" fill="#fff"/><rect x="502" y="51" width="1" height="1" fill="#000"/><rect x="494" y="52" width="10" height="1" fill="#000"/><rect x="494" y="53" width="1" height="1" fill="#000"/><rect x="495" y="53" width="1" height="1" fill="#fff"/><rect x="496" y="53" width="2" height="1" fill="#000"/><rect x="500" y="53" width="1" height="1" fill="#000"/><rect x="501" y="53" width="1" height="1" fill="#fff"/><rect x="502" y="53" width="2" height="1" fill="#000"/><rect x="493" y="54" width="12" height="1" fill="#000"/><rect x="492" y="55" width="2" height="1" fill="#000"/><rect x="494" y="55" width="1" height="1" fill="#fff"/><rect x="495" y="55" width="2" height="1" fill="#000"/><rect x="497" y="55" width="1" height="1" fill="#fff"/><rect x="498" y="55" width="2" height="1" fill="#000"/><rect x="500" y="55" width="1" height="1" fill="#fff"/><rect x="501" y="55" width="2" height="1" fill="#000"/><rect x="503" y="55" width="1" height="1" fill="#fff"/><rect x="504" y="55" width="2" height="1" fill="#000"/><rect x="492" y="56" width="2" height="1" fill="#000"/><rect x="494" y="56" width="1" height="1" fill="#fff"/><rect x="495" y="56" width="2" height="1" fill="#000"/><rect x="497" y="56" width="1" height="1" fill="#fff"/><rect x="498" y="56" width="2" height="1" fill="#000"/><rect x="500" y="56" width="1" height="1" fill="#fff"/><rect x="501" y="56" width="2" height="1" fill="#000"/><rect x="503" y="56" width="1" height="1" fill="#fff"/><rect x="504" y="56" width="2" height="1" fill="#000"/><rect x="492" y="57" width="14" height="1" fill="#000"/><rect x="492" y="58" width="6" height="1" fill="#000"/><rect x="500" y="58" width="6" height="1" fill="#000"/><rect x="492" y="59" width="1" height="1" fill="#000"/><rect x="493" y="59" width="1" height="1" fill="#fff"/><rect x="494" y="59" width="4" height="1" fill="#000"/><rect x="500" y="59" width="1" height="1" fill="#000"/><rect x="501" y="59" width="1" height="1" fill="#fff"/><rect x="502" y="59" width="4" height="1" fill="#000"/><rect x="492" y="60" width="1" height="1" fill="#000"/><rect x="493" y="60" width="1" height="1" fill="#fff"/><rect x="494" y="60" width="4" height="1" fill="#000"/><rect x="500" y="60" width="1" height="1" fill="#000"/><rect x="501" y="60" width="1" height="1" fill="#fff"/><rect x="502" y="60" width="4" height="1" fill="#000"/><rect x="492" y="61" width="6" height="1" fill="#000"/><rect x="500" y="61" width="6" height="1" fill="#000"/><rect x="492" y="62" width="6" height="1" fill="#000"/><rect x="500" y="62" width="6" height="1" fill="#000"/><rect x="527" y="50" width="8" height="1" fill="#000"/><rect x="527" y="51" width="1" height="1" fill="#000"/><rect x="528" y="51" width="7" height="1" fill="#fff"/><rect x="535" y="51" width="1" height="1" fill="#000"/><rect x="527" y="52" width="1" height="1" fill="#000"/><rect x="528" y="52" width="1" height="1" fill="#fff"/><rect x="529" y="52" width="1" height="1" fill="#a0a0a0"/><rect x="530" y="52" width="1" height="1" fill="#fff"/><rect x="531" y="52" width="1" height="1" fill="#a0a0a0"/><rect x="532" y="52" width="4" height="1" fill="#fff"/><rect x="536" y="52" width="1" height="1" fill="#000"/><rect x="525" y="53" width="13" height="1" fill="#000"/><rect x="524" y="54" width="1" height="1" fill="#000"/><rect x="525" y="54" width="13" height="1" fill="#fff"/><rect x="538" y="54" width="1" height="1" fill="#000"/><rect x="523" y="55" width="1" height="1" fill="#000"/><rect x="524" y="55" width="1" height="1" fill="#fff"/><rect x="525" y="55" width="1" height="1" fill="#c8c8c8"/><rect x="526" y="55" width="1" height="1" fill="#fff"/><rect x="527" y="55" width="1" height="1" fill="#c8c8c8"/><rect x="528" y="55" width="1" height="1" fill="#fff"/><rect x="529" y="55" width="1" height="1" fill="#c8c8c8"/><rect x="530" y="55" width="1" height="1" fill="#fff"/><rect x="531" y="55" width="1" height="1" fill="#c8c8c8"/><rect x="532" y="55" width="1" height="1" fill="#fff"/><rect x="533" y="55" width="1" height="1" fill="#c8c8c8"/><rect x="534" y="55" width="1" height="1" fill="#fff"/><rect x="535" y="55" width="1" height="1" fill="#c8c8c8"/><rect x="536" y="55" width="1" height="1" fill="#fff"/><rect x="537" y="55" width="1" height="1" fill="#c8c8c8"/><rect x="538" y="55" width="1" height="1" fill="#000"/><rect x="523" y="56" width="1" height="1" fill="#000"/><rect x="524" y="56" width="1" height="1" fill="#c8c8c8"/><rect x="525" y="56" width="1" height="1" fill="#fff"/><rect x="526" y="56" width="1" height="1" fill="#c8c8c8"/><rect x="527" y="56" width="1" height="1" fill="#fff"/><rect x="528" y="56" width="1" height="1" fill="#c8c8c8"/><rect x="529" y="56" width="1" height="1" fill="#fff"/><rect x="530" y="56" width="1" height="1" fill="#c8c8c8"/><rect x="531" y="56" width="1" height="1" fill="#fff"/><rect x="532" y="56" width="1" height="1" fill="#c8c8c8"/><rect x="533" y="56" width="1" height="1" fill="#fff"/><rect x="534" y="56" width="1" height="1" fill="#c8c8c8"/><rect x="535" y="56" width="1" height="1" fill="#fff"/><rect x="536" y="56" width="1" height="1" fill="#c8c8c8"/><rect x="537" y="56" width="1" height="1" fill="#fff"/><rect x="538" y="56" width="1" height="1" fill="#000"/><rect x="523" y="57" width="1" height="1" fill="#000"/><rect x="524" y="57" width="1" height="1" fill="#fff"/><rect x="525" y="57" width="1" height="1" fill="#c8c8c8"/><rect x="526" y="57" width="1" height="1" fill="#fff"/><rect x="527" y="57" width="1" height="1" fill="#c8c8c8"/><rect x="528" y="57" width="1" height="1" fill="#fff"/><rect x="529" y="57" width="1" height="1" fill="#c8c8c8"/><rect x="530" y="57" width="1" height="1" fill="#fff"/><rect x="531" y="57" width="1" height="1" fill="#c8c8c8"/><rect x="532" y="57" width="1" height="1" fill="#fff"/><rect x="533" y="57" width="1" height="1" fill="#c8c8c8"/><rect x="534" y="57" width="1" height="1" fill="#fff"/><rect x="535" y="57" width="1" height="1" fill="#c8c8c8"/><rect x="536" y="57" width="1" height="1" fill="#fff"/><rect x="537" y="57" width="1" height="1" fill="#c8c8c8"/><rect x="538" y="57" width="1" height="1" fill="#000"/><rect x="523" y="58" width="1" height="1" fill="#000"/><rect x="524" y="58" width="1" height="1" fill="#c8c8c8"/><rect x="525" y="58" width="1" height="1" fill="#fff"/><rect x="526" y="58" width="1" height="1" fill="#c8c8c8"/><rect x="527" y="58" width="1" height="1" fill="#fff"/><rect x="528" y="58" width="1" height="1" fill="#c8c8c8"/><rect x="529" y="58" width="1" height="1" fill="#fff"/><rect x="530" y="58" width="1" height="1" fill="#c8c8c8"/><rect x="531" y="58" width="1" height="1" fill="#fff"/><rect x="532" y="58" width="1" height="1" fill="#c8c8c8"/><rect x="533" y="58" width="1" height="1" fill="#fff"/><rect x="534" y="58" width="1" height="1" fill="#c8c8c8"/><rect x="535" y="58" width="1" height="1" fill="#fff"/><rect x="536" y="58" width="1" height="1" fill="#c8c8c8"/><rect x="537" y="58" width="1" height="1" fill="#fff"/><rect x="538" y="58" width="1" height="1" fill="#000"/><rect x="523" y="59" width="1" height="1" fill="#000"/><rect x="524" y="59" width="1" height="1" fill="#fff"/><rect x="525" y="59" width="1" height="1" fill="#c8c8c8"/><rect x="526" y="59" width="1" height="1" fill="#fff"/><rect x="527" y="59" width="1" height="1" fill="#c8c8c8"/><rect x="528" y="59" width="1" height="1" fill="#fff"/><rect x="529" y="59" width="1" height="1" fill="#c8c8c8"/><rect x="530" y="59" width="1" height="1" fill="#fff"/><rect x="531" y="59" width="1" height="1" fill="#c8c8c8"/><rect x="532" y="59" width="1" height="1" fill="#fff"/><rect x="533" y="59" width="1" height="1" fill="#c8c8c8"/><rect x="534" y="59" width="1" height="1" fill="#fff"/><rect x="535" y="59" width="1" height="1" fill="#c8c8c8"/><rect x="536" y="59" width="1" height="1" fill="#fff"/><rect x="537" y="59" width="1" height="1" fill="#c8c8c8"/><rect x="538" y="59" width="1" height="1" fill="#000"/><rect x="523" y="60" width="1" height="1" fill="#000"/><rect x="524" y="60" width="14" height="1" fill="#fff"/><rect x="538" y="60" width="1" height="1" fill="#000"/><rect x="524" y="61" width="14" height="1" fill="#000"/><rect x="526" y="62" width="11" height="1" fill="#000"/><rect x="551" y="49" width="10" height="1" fill="#000"/><rect x="550" y="50" width="1" height="1" fill="#000"/><rect x="551" y="50" width="8" height="1" fill="#fff"/><rect x="559" y="50" width="1" height="1" fill="#000"/><rect x="550" y="51" width="1" height="1" fill="#000"/><rect x="551" y="51" width="1" height="1" fill="#fff"/><rect x="552" y="51" width="5" height="1" fill="#000"/><rect x="557" y="51" width="2" height="1" fill="#fff"/><rect x="559" y="51" width="1" height="1" fill="#000"/><rect x="549" y="52" width="1" height="1" fill="#000"/><rect x="550" y="52" width="8" height="1" fill="#fff"/><rect x="558" y="52" width="1" height="1" fill="#000"/><rect x="549" y="53" width="1" height="1" fill="#000"/><rect x="550" y="53" width="1" height="1" fill="#fff"/><rect x="551" y="53" width="6" height="1" fill="#000"/><rect x="557" y="53" width="1" height="1" fill="#fff"/><rect x="558" y="53" width="2" height="1" fill="#000"/><rect x="548" y="54" width="11" height="1" fill="#000"/><rect x="559" y="54" width="1" height="1" fill="#fff"/><rect x="560" y="54" width="2" height="1" fill="#000"/><rect x="547" y="55" width="1" height="1" fill="#000"/><rect x="548" y="55" width="10" height="1" fill="#fff"/><rect x="558" y="55" width="1" height="1" fill="#000"/><rect x="559" y="55" width="1" height="1" fill="#c8c8c8"/><rect x="560" y="55" width="1" height="1" fill="#fff"/><rect x="561" y="55" width="1" height="1" fill="#000"/><rect x="546" y="56" width="13" height="1" fill="#000"/><rect x="559" y="56" width="1" height="1" fill="#fff"/><rect x="560" y="56" width="1" height="1" fill="#c8c8c8"/><rect x="561" y="56" width="1" height="1" fill="#000"/><rect x="545" y="57" width="1" height="1" fill="#000"/><rect x="546" y="57" width="12" height="1" fill="#fff"/><rect x="558" y="57" width="1" height="1" fill="#000"/><rect x="559" y="57" width="1" height="1" fill="#c8c8c8"/><rect x="560" y="57" width="1" height="1" fill="#fff"/><rect x="561" y="57" width="1" height="1" fill="#000"/><rect x="545" y="58" width="1" height="1" fill="#000"/><rect x="546" y="58" width="7" height="1" fill="#fff"/><rect x="553" y="58" width="3" height="1" fill="#ffff00"/><rect x="556" y="58" width="2" height="1" fill="#fff"/><rect x="558" y="58" width="1" height="1" fill="#000"/><rect x="559" y="58" width="1" height="1" fill="#fff"/><rect x="560" y="58" width="2" height="1" fill="#000"/><rect x="545" y="59" width="14" height="1" fill="#000"/><rect x="559" y="59" width="1" height="1" fill="#c8c8c8"/><rect x="560" y="59" width="1" height="1" fill="#000"/><rect x="545" y="60" width="1" height="1" fill="#000"/><rect x="546" y="60" width="12" height="1" fill="#fff"/><rect x="558" y="60" width="2" height="1" fill="#000"/><rect x="546" y="61" width="13" height="1" fill="#000"/><rect x="584" y="49" width="2" height="1" fill="#000"/><rect x="586" y="49" width="1" height="1" fill="#ff0000"/><rect x="583" y="50" width="3" height="1" fill="#000"/><rect x="586" y="50" width="1" height="1" fill="#ff0000"/><rect x="583" y="51" width="1" height="1" fill="#000"/><rect x="584" y="51" width="1" height="1" fill="#ffff00"/><rect x="585" y="51" width="1" height="1" fill="#000"/><rect x="582" y="52" width="1" height="1" fill="#000"/><rect x="583" y="52" width="2" height="1" fill="#ffff00"/><rect x="585" y="52" width="1" height="1" fill="#000"/><rect x="582" y="53" width="1" height="1" fill="#000"/><rect x="583" y="53" width="1" height="1" fill="#ffff00"/><rect x="584" y="53" width="1" height="1" fill="#ff0000"/><rect x="585" y="53" width="1" height="1" fill="#000"/><rect x="581" y="54" width="1" height="1" fill="#000"/><rect x="582" y="54" width="2" height="1" fill="#ffff00"/><rect x="584" y="54" width="1" height="1" fill="#000"/><rect x="581" y="55" width="1" height="1" fill="#000"/><rect x="582" y="55" width="1" height="1" fill="#ffff00"/><rect x="583" y="55" width="1" height="1" fill="#ff0000"/><rect x="584" y="55" width="1" height="1" fill="#000"/><rect x="580" y="56" width="1" height="1" fill="#000"/><rect x="581" y="56" width="2" height="1" fill="#ffff00"/><rect x="583" y="56" width="1" height="1" fill="#000"/><rect x="580" y="57" width="1" height="1" fill="#000"/><rect x="581" y="57" width="1" height="1" fill="#ff0000"/><rect x="582" y="57" width="1" height="1" fill="#ffff00"/><rect x="583" y="57" width="1" height="1" fill="#000"/><rect x="579" y="58" width="4" height="1" fill="#000"/><rect x="579" y="59" width="3" height="1" fill="#000"/><rect x="578" y="60" width="3" height="1" fill="#000"/><rect x="578" y="61" width="1" height="1" fill="#000"/><rect x="578" y="62" width="14" height="1" fill="#0000ff"/><rect x="606" y="49" width="1" height="7" fill="#000"/><rect x="599" y="56" width="15" height="1" fill="#000"/><rect x="600" y="57" width="1" height="1" fill="#000"/><rect x="601" y="57" width="11" height="1" fill="#808000"/><rect x="612" y="57" width="1" height="1" fill="#000"/><rect x="601" y="58" width="1" height="1" fill="#000"/><rect x="602" y="58" width="10" height="1" fill="#d8d8d8"/><rect x="612" y="58" width="1" height="1" fill="#000"/><rect x="602" y="59" width="1" height="1" fill="#000"/><rect x="603" y="59" width="8" height="1" fill="#d8d8d8"/><rect x="611" y="59" width="1" height="1" fill="#000"/><rect x="603" y="60" width="1" height="1" fill="#000"/><rect x="604" y="60" width="6" height="1" fill="#d8d8d8"/><rect x="610" y="60" width="1" height="1" fill="#000"/><rect x="604" y="61" width="1" height="1" fill="#000"/><rect x="605" y="61" width="1" height="1" fill="#808000"/><rect x="606" y="61" width="3" height="1" fill="#d8d8d8"/><rect x="609" y="61" width="1" height="1" fill="#000"/><rect x="605" y="62" width="1" height="1" fill="#000"/><rect x="606" y="62" width="1" height="1" fill="#808000"/><rect x="607" y="62" width="1" height="1" fill="#000"/><rect x="606" y="63" width="1" height="1" fill="#000"/><rect x="623" y="49" width="13" height="1" fill="#000"/><rect x="622" y="50" width="1" height="1" fill="#000"/><rect x="623" y="50" width="13" height="1" fill="#808000"/><rect x="636" y="50" width="1" height="1" fill="#000"/><rect x="622" y="51" width="1" height="1" fill="#000"/><rect x="623" y="51" width="1" height="1" fill="#808000"/><rect x="624" y="51" width="4" height="1" fill="#d8d8d8"/><rect x="628" y="51" width="3" height="1" fill="#000"/><rect x="631" y="51" width="4" height="1" fill="#d8d8d8"/><rect x="635" y="51" width="1" height="1" fill="#808000"/><rect x="636" y="51" width="1" height="1" fill="#000"/><rect x="622" y="52" width="1" height="1" fill="#000"/><rect x="623" y="52" width="1" height="1" fill="#808000"/><rect x="624" y="52" width="3" height="1" fill="#d8d8d8"/><rect x="627" y="52" width="1" height="1" fill="#000"/><rect x="628" y="52" width="3" height="1" fill="#d8d8d8"/><rect x="631" y="52" width="1" height="1" fill="#000"/><rect x="632" y="52" width="3" height="1" fill="#d8d8d8"/><rect x="635" y="52" width="1" height="1" fill="#808000"/><rect x="636" y="52" width="1" height="1" fill="#000"/><rect x="622" y="53" width="1" height="1" fill="#000"/><rect x="623" y="53" width="1" height="1" fill="#808000"/><rect x="624" y="53" width="3" height="1" fill="#d8d8d8"/><rect x="627" y="53" width="1" height="1" fill="#000"/><rect x="628" y="53" width="3" height="1" fill="#d8d8d8"/><rect x="631" y="53" width="1" height="1" fill="#000"/><rect x="632" y="53" width="3" height="1" fill="#d8d8d8"/><rect x="635" y="53" width="1" height="1" fill="#808000"/><rect x="636" y="53" width="1" height="1" fill="#000"/><rect x="622" y="54" width="1" height="1" fill="#000"/><rect x="623" y="54" width="1" height="1" fill="#808000"/><rect x="624" y="54" width="3" height="1" fill="#d8d8d8"/><rect x="627" y="54" width="5" height="1" fill="#000"/><rect x="632" y="54" width="3" height="1" fill="#d8d8d8"/><rect x="635" y="54" width="1" height="1" fill="#808000"/><rect x="636" y="54" width="1" height="1" fill="#000"/><rect x="622" y="55" width="1" height="1" fill="#000"/><rect x="623" y="55" width="1" height="1" fill="#808000"/><rect x="624" y="55" width="3" height="1" fill="#d8d8d8"/><rect x="627" y="55" width="1" height="1" fill="#000"/><rect x="628" y="55" width="3" height="1" fill="#d8d8d8"/><rect x="631" y="55" width="1" height="1" fill="#000"/><rect x="632" y="55" width="3" height="1" fill="#d8d8d8"/><rect x="635" y="55" width="1" height="1" fill="#808000"/><rect x="636" y="55" width="1" height="1" fill="#000"/><rect x="622" y="56" width="1" height="1" fill="#000"/><rect x="623" y="56" width="1" height="1" fill="#808000"/><rect x="624" y="56" width="3" height="1" fill="#d8d8d8"/><rect x="627" y="56" width="1" height="1" fill="#000"/><rect x="628" y="56" width="3" height="1" fill="#d8d8d8"/><rect x="631" y="56" width="1" height="1" fill="#000"/><rect x="632" y="56" width="3" height="1" fill="#d8d8d8"/><rect x="635" y="56" width="1" height="1" fill="#808000"/><rect x="636" y="56" width="1" height="1" fill="#000"/><rect x="622" y="57" width="1" height="1" fill="#000"/><rect x="623" y="57" width="13" height="1" fill="#808000"/><rect x="636" y="57" width="1" height="1" fill="#000"/><rect x="623" y="58" width="13" height="1" fill="#000"/><rect x="629" y="59" width="1" height="1" fill="#000"/><rect x="629" y="60" width="1" height="1" fill="#000"/><rect x="629" y="61" width="1" height="1" fill="#000"/><rect x="629" y="62" width="1" height="1" fill="#000"/><rect x="652" y="49" width="1" height="1" fill="#000"/><rect x="653" y="50" width="2" height="1" fill="#000"/><rect x="655" y="51" width="2" height="1" fill="#000"/><rect x="656" y="52" width="2" height="1" fill="#000"/><rect x="657" y="53" width="1" height="1" fill="#000"/><rect x="655" y="54" width="2" height="1" fill="#000"/><rect x="653" y="55" width="2" height="1" fill="#000"/><rect x="651" y="56" width="2" height="1" fill="#000"/><rect x="649" y="57" width="2" height="1" fill="#000"/><rect x="648" y="58" width="1" height="1" fill="#000"/><rect x="649" y="59" width="2" height="1" fill="#000"/><rect x="651" y="60" width="2" height="1" fill="#000"/><rect x="653" y="61" width="1" height="1" fill="#000"/><rect x="653" y="62" width="1" height="1" fill="#000"/><rect x="653" y="63" width="1" height="1" fill="#000"/><rect x="675" y="49" width="1" height="6" fill="#000"/><rect x="670" y="55" width="11" height="1" fill="#000"/><rect x="670" y="58" width="11" height="1" fill="#000"/><rect x="675" y="59" width="1" height="5" fill="#000"/><rect x="696" y="49" width="1" height="1" fill="#000"/><rect x="697" y="50" width="2" height="1" fill="#000"/><rect x="699" y="51" width="1" height="1" fill="#000"/><rect x="700" y="52" width="1" height="1" fill="#000"/><rect x="700" y="53" width="1" height="1" fill="#000"/><rect x="699" y="54" width="1" height="1" fill="#000"/><rect x="696" y="55" width="3" height="1" fill="#000"/><rect x="699" y="56" width="1" height="1" fill="#000"/><rect x="700" y="57" width="1" height="1" fill="#000"/><rect x="700" y="58" width="1" height="1" fill="#000"/><rect x="699" y="59" width="1" height="1" fill="#000"/><rect x="697" y="60" width="2" height="1" fill="#000"/><rect x="696" y="61" width="1" height="1" fill="#000"/><rect x="696" y="62" width="1" height="1" fill="#000"/><rect x="722" y="49" width="1" height="15" fill="#000"/><rect x="715" y="52" width="15" height="1" fill="#000"/><rect x="715" y="60" width="15" height="1" fill="#000"/><rect x="716" y="53" width="1" height="1" fill="#000"/><rect x="728" y="53" width="1" height="1" fill="#000"/><rect x="717" y="54" width="1" height="1" fill="#000"/><rect x="718" y="54" width="9" height="1" fill="#d8d8d8"/><rect x="727" y="54" width="1" height="1" fill="#000"/><rect x="718" y="55" width="1" height="1" fill="#000"/><rect x="719" y="55" width="7" height="1" fill="#d8d8d8"/><rect x="726" y="55" width="1" height="1" fill="#000"/><rect x="719" y="56" width="1" height="1" fill="#000"/><rect x="720" y="56" width="5" height="1" fill="#d8d8d8"/><rect x="725" y="56" width="1" height="1" fill="#000"/><rect x="720" y="57" width="1" height="1" fill="#000"/><rect x="721" y="57" width="3" height="1" fill="#d8d8d8"/><rect x="724" y="57" width="1" height="1" fill="#000"/><rect x="721" y="58" width="1" height="1" fill="#000"/><rect x="722" y="58" width="1" height="1" fill="#d8d8d8"/><rect x="723" y="58" width="1" height="1" fill="#000"/><rect x="740" y="51" width="7" height="1" fill="#000"/><rect x="740" y="52" width="1" height="1" fill="#000"/><rect x="741" y="52" width="6" height="1" fill="#d8d8d8"/><rect x="747" y="52" width="2" height="1" fill="#000"/><rect x="737" y="53" width="4" height="1" fill="#000"/><rect x="741" y="53" width="7" height="1" fill="#d8d8d8"/><rect x="748" y="53" width="1" height="1" fill="#000"/><rect x="740" y="54" width="1" height="1" fill="#000"/><rect x="741" y="54" width="8" height="1" fill="#d8d8d8"/><rect x="749" y="54" width="1" height="1" fill="#000"/><rect x="740" y="55" width="1" height="1" fill="#000"/><rect x="741" y="55" width="9" height="1" fill="#d8d8d8"/><rect x="750" y="55" width="1" height="1" fill="#000"/><rect x="740" y="56" width="1" height="1" fill="#000"/><rect x="741" y="56" width="9" height="1" fill="#d8d8d8"/><rect x="750" y="56" width="4" height="1" fill="#000"/><rect x="740" y="57" width="1" height="1" fill="#000"/><rect x="741" y="57" width="9" height="1" fill="#d8d8d8"/><rect x="750" y="57" width="1" height="1" fill="#000"/><rect x="740" y="58" width="1" height="1" fill="#000"/><rect x="741" y="58" width="8" height="1" fill="#d8d8d8"/><rect x="749" y="58" width="1" height="1" fill="#000"/><rect x="737" y="59" width="4" height="1" fill="#000"/><rect x="741" y="59" width="7" height="1" fill="#d8d8d8"/><rect x="748" y="59" width="1" height="1" fill="#000"/><rect x="740" y="60" width="1" height="1" fill="#000"/><rect x="741" y="60" width="6" height="1" fill="#d8d8d8"/><rect x="747" y="60" width="2" height="1" fill="#000"/><rect x="740" y="61" width="7" height="1" fill="#000"/><rect x="763" y="49" width="2" height="1" fill="#000"/><rect x="771" y="49" width="2" height="1" fill="#000"/><rect x="762" y="50" width="1" height="1" fill="#000"/><rect x="763" y="50" width="2" height="1" fill="#fff"/><rect x="765" y="50" width="1" height="1" fill="#000"/><rect x="770" y="50" width="1" height="1" fill="#000"/><rect x="771" y="50" width="2" height="1" fill="#fff"/><rect x="773" y="50" width="1" height="1" fill="#000"/><rect x="762" y="51" width="1" height="1" fill="#000"/><rect x="763" y="51" width="2" height="1" fill="#fff"/><rect x="765" y="51" width="1" height="1" fill="#000"/><rect x="770" y="51" width="1" height="1" fill="#000"/><rect x="771" y="51" width="2" height="1" fill="#fff"/><rect x="773" y="51" width="2" height="1" fill="#000"/><rect x="763" y="52" width="1" height="1" fill="#000"/><rect x="764" y="52" width="2" height="1" fill="#fff"/><rect x="766" y="52" width="1" height="1" fill="#000"/><rect x="769" y="52" width="1" height="1" fill="#000"/><rect x="770" y="52" width="2" height="1" fill="#fff"/><rect x="772" y="52" width="1" height="1" fill="#000"/><rect x="773" y="52" width="2" height="1" fill="#fff"/><rect x="775" y="52" width="1" height="1" fill="#000"/><rect x="763" y="53" width="1" height="1" fill="#000"/><rect x="764" y="53" width="2" height="1" fill="#fff"/><rect x="766" y="53" width="1" height="1" fill="#000"/><rect x="769" y="53" width="1" height="1" fill="#000"/><rect x="770" y="53" width="2" height="1" fill="#fff"/><rect x="772" y="53" width="1" height="1" fill="#000"/><rect x="773" y="53" width="2" height="1" fill="#fff"/><rect x="775" y="53" width="1" height="1" fill="#000"/><rect x="764" y="54" width="1" height="1" fill="#000"/><rect x="765" y="54" width="2" height="1" fill="#fff"/><rect x="767" y="54" width="2" height="1" fill="#000"/><rect x="769" y="54" width="2" height="1" fill="#fff"/><rect x="771" y="54" width="1" height="1" fill="#000"/><rect x="772" y="54" width="2" height="1" fill="#fff"/><rect x="774" y="54" width="1" height="1" fill="#000"/><rect x="775" y="54" width="1" height="1" fill="#fff"/><rect x="776" y="54" width="1" height="1" fill="#000"/><rect x="761" y="55" width="2" height="1" fill="#000"/><rect x="764" y="55" width="1" height="1" fill="#000"/><rect x="765" y="55" width="6" height="1" fill="#fff"/><rect x="771" y="55" width="1" height="1" fill="#000"/><rect x="772" y="55" width="2" height="1" fill="#fff"/><rect x="774" y="55" width="1" height="1" fill="#000"/><rect x="775" y="55" width="1" height="1" fill="#fff"/><rect x="776" y="55" width="1" height="1" fill="#000"/><rect x="760" y="56" width="1" height="1" fill="#000"/><rect x="761" y="56" width="2" height="1" fill="#fff"/><rect x="763" y="56" width="1" height="1" fill="#000"/><rect x="764" y="56" width="12" height="1" fill="#fff"/><rect x="776" y="56" width="1" height="1" fill="#000"/><rect x="760" y="57" width="1" height="1" fill="#000"/><rect x="761" y="57" width="1" height="1" fill="#fff"/><rect x="762" y="57" width="2" height="1" fill="#000"/><rect x="764" y="57" width="8" height="1" fill="#fff"/><rect x="772" y="57" width="1" height="1" fill="#008080"/><rect x="773" y="57" width="3" height="1" fill="#fff"/><rect x="776" y="57" width="1" height="1" fill="#000"/><rect x="761" y="58" width="1" height="1" fill="#000"/><rect x="762" y="58" width="13" height="1" fill="#fff"/><rect x="775" y="58" width="1" height="1" fill="#000"/><rect x="762" y="59" width="1" height="1" fill="#000"/><rect x="763" y="59" width="12" height="1" fill="#fff"/><rect x="775" y="59" width="1" height="1" fill="#000"/><rect x="763" y="60" width="1" height="1" fill="#000"/><rect x="764" y="60" width="10" height="1" fill="#fff"/><rect x="774" y="60" width="1" height="1" fill="#000"/><rect x="764" y="61" width="1" height="1" fill="#000"/><rect x="765" y="61" width="8" height="1" fill="#fff"/><rect x="773" y="61" width="1" height="1" fill="#000"/><rect x="765" y="62" width="1" height="1" fill="#000"/><rect x="766" y="62" width="6" height="1" fill="#fff"/><rect x="772" y="62" width="1" height="1" fill="#000"/><rect x="765" y="63" width="1" height="1" fill="#000"/><rect x="766" y="63" width="6" height="1" fill="#fff"/><rect x="772" y="63" width="1" height="1" fill="#000"/><rect x="765" y="64" width="8" height="1" fill="#000"/><rect x="788" y="51" width="3" height="1" fill="#000"/><rect x="792" y="51" width="3" height="1" fill="#000"/><rect x="787" y="52" width="1" height="1" fill="#000"/><rect x="788" y="52" width="3" height="1" fill="#fff"/><rect x="791" y="52" width="1" height="1" fill="#000"/><rect x="792" y="52" width="3" height="1" fill="#fff"/><rect x="795" y="52" width="2" height="1" fill="#000"/><rect x="786" y="53" width="2" height="1" fill="#000"/><rect x="788" y="53" width="2" height="1" fill="#fff"/><rect x="790" y="53" width="1" height="1" fill="#000"/><rect x="791" y="53" width="2" height="1" fill="#fff"/><rect x="793" y="53" width="1" height="1" fill="#000"/><rect x="794" y="53" width="3" height="1" fill="#fff"/><rect x="797" y="53" width="1" height="1" fill="#000"/><rect x="785" y="54" width="1" height="1" fill="#000"/><rect x="786" y="54" width="1" height="1" fill="#fff"/><rect x="787" y="54" width="1" height="1" fill="#000"/><rect x="788" y="54" width="2" height="1" fill="#fff"/><rect x="790" y="54" width="1" height="1" fill="#000"/><rect x="791" y="54" width="2" height="1" fill="#fff"/><rect x="793" y="54" width="1" height="1" fill="#000"/><rect x="794" y="54" width="3" height="1" fill="#fff"/><rect x="797" y="54" width="1" height="1" fill="#000"/><rect x="784" y="55" width="1" height="1" fill="#000"/><rect x="785" y="55" width="2" height="1" fill="#fff"/><rect x="787" y="55" width="1" height="1" fill="#000"/><rect x="788" y="55" width="2" height="1" fill="#fff"/><rect x="790" y="55" width="1" height="1" fill="#000"/><rect x="791" y="55" width="2" height="1" fill="#fff"/><rect x="793" y="55" width="1" height="1" fill="#000"/><rect x="794" y="55" width="3" height="1" fill="#fff"/><rect x="797" y="55" width="1" height="1" fill="#000"/><rect x="784" y="56" width="1" height="1" fill="#000"/><rect x="785" y="56" width="3" height="1" fill="#fff"/><rect x="788" y="56" width="1" height="1" fill="#000"/><rect x="789" y="56" width="8" height="1" fill="#fff"/><rect x="797" y="56" width="1" height="1" fill="#000"/><rect x="785" y="57" width="1" height="1" fill="#000"/><rect x="786" y="57" width="2" height="1" fill="#fff"/><rect x="788" y="57" width="1" height="1" fill="#000"/><rect x="789" y="57" width="8" height="1" fill="#fff"/><rect x="797" y="57" width="1" height="1" fill="#000"/><rect x="786" y="58" width="1" height="1" fill="#000"/><rect x="787" y="58" width="10" height="1" fill="#fff"/><rect x="797" y="58" width="1" height="1" fill="#000"/><rect x="787" y="59" width="1" height="1" fill="#000"/><rect x="788" y="59" width="8" height="1" fill="#fff"/><rect x="796" y="59" width="1" height="1" fill="#000"/><rect x="787" y="60" width="1" height="1" fill="#000"/><rect x="788" y="60" width="7" height="1" fill="#fff"/><rect x="795" y="60" width="1" height="1" fill="#000"/><rect x="787" y="61" width="1" height="1" fill="#000"/><rect x="788" y="61" width="6" height="1" fill="#fff"/><rect x="794" y="61" width="1" height="1" fill="#000"/><rect x="787" y="62" width="1" height="1" fill="#000"/><rect x="788" y="62" width="6" height="1" fill="#fff"/><rect x="794" y="62" width="1" height="1" fill="#000"/><rect x="787" y="63" width="8" height="1" fill="#000"/><rect x="813" y="50" width="2" height="1" fill="#a0a0a0"/><rect x="810" y="51" width="3" height="1" fill="#a0a0a0"/><rect x="815" y="51" width="2" height="1" fill="#a0a0a0"/><rect x="809" y="52" width="1" height="1" fill="#a0a0a0"/><rect x="817" y="52" width="1" height="1" fill="#a0a0a0"/><rect x="807" y="53" width="2" height="1" fill="#a0a0a0"/><rect x="818" y="53" width="1" height="1" fill="#a0a0a0"/><rect x="807" y="54" width="3" height="1" fill="#a0a0a0"/><rect x="811" y="54" width="1" height="1" fill="#a0a0a0"/><rect x="818" y="54" width="1" height="1" fill="#a0a0a0"/><rect x="807" y="55" width="3" height="1" fill="#a0a0a0"/><rect x="819" y="55" width="1" height="1" fill="#a0a0a0"/><rect x="807" y="56" width="4" height="1" fill="#a0a0a0"/><rect x="819" y="56" width="1" height="1" fill="#a0a0a0"/><rect x="818" y="57" width="1" height="1" fill="#a0a0a0"/><rect x="817" y="58" width="1" height="1" fill="#a0a0a0"/><rect x="811" y="59" width="1" height="1" fill="#a0a0a0"/><rect x="816" y="59" width="1" height="1" fill="#a0a0a0"/><rect x="812" y="60" width="4" height="1" fill="#a0a0a0"/><rect x="836" y="50" width="2" height="1" fill="#a0a0a0"/><rect x="834" y="51" width="2" height="1" fill="#a0a0a0"/><rect x="838" y="51" width="3" height="1" fill="#a0a0a0"/><rect x="833" y="52" width="1" height="1" fill="#a0a0a0"/><rect x="841" y="52" width="1" height="1" fill="#a0a0a0"/><rect x="832" y="53" width="1" height="1" fill="#a0a0a0"/><rect x="842" y="53" width="2" height="1" fill="#a0a0a0"/><rect x="832" y="54" width="1" height="1" fill="#a0a0a0"/><rect x="839" y="54" width="1" height="1" fill="#a0a0a0"/><rect x="841" y="54" width="3" height="1" fill="#a0a0a0"/><rect x="831" y="55" width="1" height="1" fill="#a0a0a0"/><rect x="841" y="55" width="3" height="1" fill="#a0a0a0"/><rect x="831" y="56" width="1" height="1" fill="#a0a0a0"/><rect x="840" y="56" width="4" height="1" fill="#a0a0a0"/><rect x="832" y="57" width="1" height="1" fill="#a0a0a0"/><rect x="833" y="58" width="1" height="1" fill="#a0a0a0"/><rect x="834" y="59" width="1" height="1" fill="#a0a0a0"/><rect x="839" y="59" width="1" height="1" fill="#a0a0a0"/><rect x="835" y="60" width="4" height="1" fill="#a0a0a0"/><rect x="858" y="49" width="5" height="1" fill="#a0a0a0"/><rect x="857" y="50" width="1" height="1" fill="#a0a0a0"/><rect x="863" y="50" width="1" height="1" fill="#a0a0a0"/><rect x="856" y="51" width="1" height="1" fill="#a0a0a0"/><rect x="864" y="51" width="2" height="1" fill="#a0a0a0"/><rect x="855" y="52" width="1" height="1" fill="#a0a0a0"/><rect x="863" y="52" width="3" height="1" fill="#a0a0a0"/><rect x="863" y="53" width="3" height="1" fill="#a0a0a0"/><rect x="852" y="55" width="4" height="1" fill="#a0a0a0"/><rect x="852" y="56" width="2" height="1" fill="#a0a0a0"/><rect x="859" y="56" width="8" height="1" fill="#a0a0a0"/><rect x="852" y="57" width="2" height="1" fill="#a0a0a0"/><rect x="859" y="57" width="8" height="1" fill="#a0a0a0"/><rect x="852" y="58" width="3" height="1" fill="#a0a0a0"/><rect x="859" y="58" width="2" height="1" fill="#a0a0a0"/><rect x="863" y="58" width="1" height="1" fill="#a0a0a0"/><rect x="866" y="58" width="2" height="1" fill="#a0a0a0"/><rect x="852" y="59" width="2" height="1" fill="#a0a0a0"/><rect x="859" y="59" width="1" height="1" fill="#a0a0a0"/><rect x="863" y="59" width="1" height="1" fill="#a0a0a0"/><rect x="867" y="59" width="1" height="1" fill="#a0a0a0"/><rect x="852" y="60" width="2" height="1" fill="#a0a0a0"/><rect x="859" y="60" width="1" height="1" fill="#a0a0a0"/><rect x="867" y="60" width="1" height="1" fill="#a0a0a0"/><rect x="852" y="61" width="2" height="1" fill="#a0a0a0"/><rect x="852" y="62" width="2" height="1" fill="#a0a0a0"/><rect x="852" y="63" width="4" height="1" fill="#a0a0a0"/><rect x="881" y="49" width="5" height="1" fill="#a0a0a0"/><rect x="880" y="50" width="1" height="1" fill="#a0a0a0"/><rect x="886" y="50" width="1" height="1" fill="#a0a0a0"/><rect x="879" y="51" width="1" height="1" fill="#a0a0a0"/><rect x="887" y="51" width="2" height="1" fill="#a0a0a0"/><rect x="878" y="52" width="1" height="1" fill="#a0a0a0"/><rect x="886" y="52" width="3" height="1" fill="#a0a0a0"/><rect x="886" y="53" width="3" height="1" fill="#a0a0a0"/><rect x="875" y="55" width="4" height="1" fill="#a0a0a0"/><rect x="886" y="55" width="4" height="1" fill="#a0a0a0"/><rect x="875" y="56" width="2" height="1" fill="#a0a0a0"/><rect x="888" y="56" width="2" height="1" fill="#a0a0a0"/><rect x="875" y="57" width="2" height="1" fill="#a0a0a0"/><rect x="888" y="57" width="2" height="1" fill="#a0a0a0"/><rect x="875" y="58" width="3" height="1" fill="#a0a0a0"/><rect x="887" y="58" width="3" height="1" fill="#a0a0a0"/><rect x="875" y="59" width="2" height="1" fill="#a0a0a0"/><rect x="888" y="59" width="2" height="1" fill="#a0a0a0"/><rect x="875" y="60" width="2" height="1" fill="#a0a0a0"/><rect x="888" y="60" width="2" height="1" fill="#a0a0a0"/><rect x="875" y="61" width="2" height="1" fill="#a0a0a0"/><rect x="888" y="61" width="2" height="1" fill="#a0a0a0"/><rect x="875" y="62" width="2" height="1" fill="#a0a0a0"/><rect x="888" y="62" width="2" height="1" fill="#a0a0a0"/><rect x="875" y="63" width="4" height="1" fill="#a0a0a0"/><rect x="886" y="63" width="4" height="1" fill="#a0a0a0"/><text x="898" y="62" font-family="Liberation Serif" font-style="italic" font-weight="bold" font-size="15" fill="#000" letter-spacing="-1.2">Aa</text><text x="921" y="59.5" font-family="Liberation Serif" font-size="14" fill="#000" letter-spacing="-0.3">.op</text></svg>
<div class="a" style="left:5px;top:71px;width:1295px;height:1px;background:#a0a0a0"></div>
<div class="a" style="left:5px;top:72px;width:1295px;height:1px;background:#6e6e6e"></div>

<!-- tabs -->
<div class="a" style="left:5px;top:73px;width:1295px;height:1px;background:#fff"></div>
<div class="a" style="left:5px;top:94px;width:1295px;height:1px;background:#8a93a0"></div>
<div class="a" style="left:5px;top:95px;width:1295px;height:1px;background:#fff"></div>
<div class="a" style="left:5px;top:96px;width:1295px;height:1px;background:#8a90a0"></div>
<div class="a" style="left:5px;top:97px;width:1295px;height:1px;background:#fff"></div>
<div class="a" style="left:5px;top:98px;width:1295px;height:1px;background:#f0f0f0"></div>
<div class="a" style="left:5px;top:99px;width:1295px;height:1px;background:#f8f8f8"></div>
<div class="a" style="left:5px;top:73px;width:1px;height:923px;background:#a0a0a0"></div><div class="a" style="left:6px;top:73px;width:1px;height:923px;background:#7c7c7c"></div>
<div class="a" style="left:7px;top:73px;width:114px;height:23px;background:#fff;border:1px solid #8a93a0;border-bottom:none"></div>
<div class="a" style="left:120px;top:75px;width:107px;height:19px;background:linear-gradient(#fdfdfd 0,#ececec 10%,#dadada 100%);border:1px solid #8a93a0;border-bottom:none"></div>
<svg style="left:0;top:0" width="300" height="100"><rect x="17" y="82" width="3" height="1" fill="#0000ff"/><rect x="20" y="78" width="2" height="9" fill="#0000ff"/><rect x="26" y="75" width="1" height="1" fill="#0000ff"/><rect x="25" y="76" width="1" height="1" fill="#0000ff"/><rect x="24" y="77" width="1" height="1" fill="#0000ff"/><rect x="23" y="78" width="1" height="1" fill="#0000ff"/><rect x="22" y="79" width="1" height="1" fill="#0000ff"/><rect x="22" y="85" width="1" height="1" fill="#0000ff"/><rect x="23" y="86" width="1" height="1" fill="#0000ff"/><rect x="25" y="86" width="1" height="1" fill="#0000ff"/><rect x="24" y="87" width="2" height="1" fill="#0000ff"/><rect x="23" y="88" width="4" height="1" fill="#0000ff"/><rect x="25" y="89" width="2" height="1" fill="#0000ff"/><rect x="27" y="90" width="1" height="1" fill="#0000ff"/><rect x="129" y="77" width="12" height="12" fill="#c0c0c0"/><rect x="127" y="77" width="1" height="16" fill="#000"/><rect x="125" y="90" width="16" height="1" fill="#000"/><rect x="125" y="78" width="2" height="1" fill="#000"/><rect x="125" y="81" width="2" height="1" fill="#000"/><rect x="125" y="84" width="2" height="1" fill="#000"/><rect x="125" y="87" width="2" height="1" fill="#000"/><rect x="125" y="90" width="2" height="1" fill="#000"/><rect x="127" y="91" width="1" height="2" fill="#000"/><rect x="130" y="91" width="1" height="2" fill="#000"/><rect x="133" y="91" width="1" height="2" fill="#000"/><rect x="136" y="91" width="1" height="2" fill="#000"/><rect x="139" y="91" width="1" height="2" fill="#000"/><rect x="140" y="80" width="1" height="1" fill="#ff0000"/><rect x="131" y="81" width="3" height="1" fill="#ff0000"/><rect x="139" y="81" width="2" height="1" fill="#ff0000"/><rect x="130" y="82" width="5" height="1" fill="#ff0000"/><rect x="138" y="82" width="3" height="1" fill="#ff0000"/><rect x="129" y="83" width="2" height="1" fill="#ff0000"/><rect x="134" y="83" width="6" height="1" fill="#ff0000"/><rect x="128" y="84" width="2" height="1" fill="#ff0000"/><rect x="136" y="84" width="3" height="1" fill="#ff0000"/><rect x="128" y="85" width="1" height="1" fill="#ff0000"/></svg>
<div class="a" style="left:37px;top:77px;font-size:12px;color:#000;white-space:pre;line-height:14px;transform:scaleX(0.91);transform-origin:0 0">Reihenkreis.asc</div>
<div class="a" style="left:147px;top:79px;font-size:12px;color:#000;white-space:pre;line-height:14px;transform:scaleX(0.895);transform-origin:0 0">Reihenkreis.raw</div>

<!-- plot child window -->
<div class="a" style="left:7px;top:100px;width:1300px;height:445px;background:#d7e3f0;border-top:1px solid #404040;border-left:1px solid #505050;border-radius:5px 0 0 0"></div>
<div class="a" style="left:11px;top:101px;width:1289px;height:1px;background:#e4eaf4"></div>
<div class="a" style="left:8px;top:104px;width:1px;height:439px;background:#eef3f8"></div>
<div class="a" style="left:9px;top:102px;width:1291px;height:27px;background:linear-gradient(#bccbd9,#d6e2ef)"></div>
<div class="a" style="left:14px;top:129px;width:1286px;height:1px;background:#dfe9f5"></div>
<div class="a" style="left:14px;top:129px;width:1px;height:405px;background:#dfe9f5"></div>
<div class="a" style="left:9px;top:542px;width:1291px;height:1px;background:#eaf2fa"></div>
<div class="a" style="left:7px;top:543px;width:1293px;height:1px;background:#333"></div>
<div class="a" style="left:15px;top:130px;width:1285px;height:404px;background:#000;border-top:1px solid #909090;border-left:1px solid #909090"></div>
<div class="a" style="left:16px;top:131px;width:1284px;height:1px;background:#404040"></div>
<div class="a" style="left:16px;top:131px;width:1px;height:403px;background:#404040"></div>
<div class="a" style="left:15px;top:534px;width:1285px;height:2px;background:#fff"></div>
<svg style="left:0;top:0" width="300" height="140"><rect x="21" y="110" width="12" height="12" fill="#c0c0c0"/><rect x="19" y="110" width="1" height="16" fill="#000"/><rect x="17" y="123" width="16" height="1" fill="#000"/><rect x="17" y="111" width="2" height="1" fill="#000"/><rect x="17" y="114" width="2" height="1" fill="#000"/><rect x="17" y="117" width="2" height="1" fill="#000"/><rect x="17" y="120" width="2" height="1" fill="#000"/><rect x="17" y="123" width="2" height="1" fill="#000"/><rect x="19" y="124" width="1" height="2" fill="#000"/><rect x="22" y="124" width="1" height="2" fill="#000"/><rect x="25" y="124" width="1" height="2" fill="#000"/><rect x="28" y="124" width="1" height="2" fill="#000"/><rect x="31" y="124" width="1" height="2" fill="#000"/><rect x="32" y="113" width="1" height="1" fill="#ff0000"/><rect x="23" y="114" width="3" height="1" fill="#ff0000"/><rect x="31" y="114" width="2" height="1" fill="#ff0000"/><rect x="22" y="115" width="5" height="1" fill="#ff0000"/><rect x="30" y="115" width="3" height="1" fill="#ff0000"/><rect x="21" y="116" width="2" height="1" fill="#ff0000"/><rect x="26" y="116" width="6" height="1" fill="#ff0000"/><rect x="20" y="117" width="2" height="1" fill="#ff0000"/><rect x="28" y="117" width="3" height="1" fill="#ff0000"/><rect x="20" y="118" width="1" height="1" fill="#ff0000"/></svg>
<div class="a" style="left:37px;top:112px;font-size:12px;color:#474d55;white-space:pre;line-height:15px;transform:scaleX(0.96);transform-origin:0 0">Reihenkreis.raw</div>

<!-- plot -->
<svg style="left:0;top:0" width="1300" height="996" shape-rendering="crispEdges">
<g fill="#c0c0c0">
<rect x="59" y="150" width="1241" height="1"/>
<rect x="59" y="508" width="1241" height="1"/>
<rect x="66" y="150" width="1" height="366"/>
<rect x="59" y="150" width="7" height="1"/><rect x="59" y="186" width="7" height="1"/><rect x="59" y="222" width="7" height="1"/><rect x="59" y="257" width="7" height="1"/><rect x="59" y="293" width="7" height="1"/><rect x="59" y="329" width="7" height="1"/><rect x="59" y="365" width="7" height="1"/><rect x="59" y="401" width="7" height="1"/><rect x="59" y="436" width="7" height="1"/><rect x="59" y="472" width="7" height="1"/><rect x="59" y="508" width="7" height="1"/>
<rect x="225" y="509" width="1" height="7"/><rect x="383" y="509" width="1" height="7"/><rect x="542" y="509" width="1" height="7"/><rect x="701" y="509" width="1" height="7"/><rect x="860" y="509" width="1" height="7"/><rect x="1018" y="509" width="1" height="7"/><rect x="1177" y="509" width="1" height="7"/>
</g>
<polyline points="66.5,329.0 67.5,290.0 68.5,244.0 69.5,262.0 70.5,282.0 71.5,300.0 72.5,318.0 73.5,345.0 74.5,372.0 75.5,400.0 76.5,445.0 77.5,499.0 78.5,492.0 79.5,440.0 80.5,418.4 81.5,369.4 82.5,317.1 83.5,267.3 84.5,223.8 85.5,190.8 86.5,171.4 87.5,167.3 88.5,178.8 89.5,204.7 90.5,242.4 91.5,288.1 92.5,337.6 93.5,386.9 94.5,430.1 95.5,463.3 96.5,483.3 97.5,488.3 98.5,477.9 99.5,453.2 100.5,416.7 101.5,372.1 102.5,323.7 103.5,277.3 104.5,236.1 105.5,204.3 106.5,184.7 107.5,179.1 108.5,188.1 109.5,210.5 110.5,244.2 111.5,285.8 112.5,331.3 113.5,377.3 114.5,418.2 115.5,450.2 116.5,470.2 117.5,476.5 118.5,468.6 119.5,447.2 120.5,414.6 121.5,374.1 122.5,329.5 123.5,286.1 124.5,247.3 125.5,216.6 126.5,197.0 127.5,190.3 128.5,197.0 129.5,216.3 130.5,246.4 131.5,284.2 132.5,326.0 133.5,368.7 134.5,407.3 135.5,438.0 136.5,458.0 137.5,465.4 138.5,459.6 139.5,441.3 140.5,412.3 141.5,375.5 142.5,334.4 143.5,294.0 144.5,257.4 145.5,228.0 146.5,208.5 147.5,200.8 148.5,205.5 149.5,222.1 150.5,248.8 151.5,283.1 152.5,321.5 153.5,361.1 154.5,397.4 155.5,426.9 156.5,446.7 157.5,455.0 158.5,451.1 159.5,435.5 160.5,409.7 161.5,376.3 162.5,338.7 163.5,301.0 164.5,266.6 165.5,238.4 166.5,219.2 167.5,210.7 168.5,213.7 169.5,227.8 170.5,251.5 171.5,282.5 172.5,317.7 173.5,354.4 174.5,388.5 175.5,416.7 176.5,436.2 177.5,445.2 178.5,442.9 179.5,429.7 180.5,406.9 181.5,376.7 182.5,342.2 183.5,307.2 184.5,274.8 185.5,247.9 186.5,229.1 187.5,220.0 188.5,221.5 189.5,233.3 190.5,254.3 191.5,282.3 192.5,314.6 193.5,348.4 194.5,380.5 195.5,407.4 196.5,426.5 197.5,436.0 198.5,435.2 199.5,424.1 200.5,404.0 201.5,376.8 202.5,345.2 203.5,312.6 204.5,282.3 205.5,256.7 206.5,238.2 207.5,228.7 208.5,228.9 209.5,238.7 210.5,257.2 211.5,282.4 212.5,312.0 213.5,343.2 214.5,373.3 215.5,398.8 216.5,417.5 217.5,427.4 218.5,427.8 219.5,418.7 220.5,401.0 221.5,376.5 222.5,347.6 223.5,317.4 224.5,289.0 225.5,264.6 226.5,246.7 227.5,236.8 228.5,235.9 229.5,244.0 230.5,260.2 231.5,282.9 232.5,309.8 233.5,338.7 234.5,366.8 235.5,391.0 236.5,409.1 237.5,419.4 238.5,420.8 239.5,413.4 240.5,397.9 241.5,375.9 242.5,349.5 243.5,321.6 244.5,295.0 245.5,271.9 246.5,254.5 247.5,244.4 248.5,242.5 249.5,249.0 250.5,263.2 251.5,283.6 252.5,308.2 253.5,334.7 254.5,361.0 255.5,383.9 256.5,401.5 257.5,411.8 258.5,414.2 259.5,408.3 260.5,394.8 261.5,375.1 262.5,351.0 263.5,325.2 264.5,300.4 265.5,278.5 266.5,261.7 267.5,251.5 268.5,248.8 269.5,253.9 270.5,266.2 271.5,284.5 272.5,306.9 273.5,331.3 274.5,355.8 275.5,377.5 276.5,394.4 277.5,404.9 278.5,407.9 279.5,403.4 280.5,391.7 281.5,374.0 282.5,352.2 283.5,328.3 284.5,305.2 285.5,284.5 286.5,268.3 287.5,258.1 288.5,254.8 289.5,258.6 290.5,269.3 291.5,285.5 292.5,305.9 293.5,328.3 294.5,351.1 295.5,371.6 296.5,387.9 297.5,398.3 298.5,402.0 299.5,398.6 300.5,388.6 301.5,372.8 302.5,353.0 303.5,331.0 304.5,309.4 305.5,290.0 306.5,274.4 307.5,264.2 308.5,260.4 309.5,263.2 310.5,272.3 311.5,286.8 312.5,305.2 313.5,325.8 314.5,347.0 315.5,366.3 316.5,381.9 317.5,392.3 318.5,396.5 319.5,394.1 320.5,385.5 321.5,371.5 322.5,353.5 323.5,333.3 324.5,313.2 325.5,294.9 326.5,280.0 327.5,269.9 328.5,265.6 329.5,267.5 330.5,275.2 331.5,288.1 332.5,304.8 333.5,323.8 334.5,343.4 335.5,361.5 336.5,376.4 337.5,386.7 338.5,391.2 339.5,389.8 340.5,382.5 341.5,370.1 342.5,353.8 343.5,335.3 344.5,316.6 345.5,299.4 346.5,285.1 347.5,275.2 348.5,270.6 349.5,271.6 350.5,278.2 351.5,289.5 352.5,304.7 353.5,322.0 354.5,340.1 355.5,357.2 356.5,371.4 357.5,381.5 358.5,386.3 359.5,385.7 360.5,379.6 361.5,368.6 362.5,353.9 363.5,336.9 364.5,319.6 365.5,303.4 366.5,289.8 367.5,280.1 368.5,275.2 369.5,275.5 370.5,281.0 371.5,291.0 372.5,304.7 373.5,320.5 374.5,337.3 375.5,353.3 376.5,366.8 377.5,376.6 378.5,381.8 379.5,381.8 380.5,376.7 381.5,367.0 382.5,353.8 383.5,338.3 384.5,322.2 385.5,307.0 386.5,294.1 387.5,284.7 388.5,279.6 389.5,279.3 390.5,283.8 391.5,292.6 392.5,304.9 393.5,319.4 394.5,334.8 395.5,349.8 396.5,362.7 397.5,372.2 398.5,377.5 399.5,378.1 400.5,373.9 401.5,365.4 402.5,353.6 403.5,339.4 404.5,324.4 405.5,310.3 406.5,298.0 407.5,288.8 408.5,283.6 409.5,282.8 410.5,286.4 411.5,294.2 412.5,305.2 413.5,318.4 414.5,332.6 415.5,346.6 416.5,358.8 417.5,368.1 418.5,373.5 419.5,374.5 420.5,371.2 421.5,363.8 422.5,353.2 423.5,340.2 424.5,326.4 425.5,313.2 426.5,301.6 427.5,292.7 428.5,287.4 429.5,286.1 430.5,289.0 431.5,295.7 432.5,305.6 433.5,317.7 434.5,330.7 435.5,343.8 436.5,355.4 437.5,364.3 438.5,369.7 439.5,371.2 440.5,368.6 441.5,362.2 442.5,352.7 443.5,340.9 444.5,328.1 445.5,315.8 446.5,304.8 447.5,296.2 448.5,290.9 449.5,289.3 450.5,291.5 451.5,297.3 452.5,306.2 453.5,317.1 454.5,329.1 455.5,341.3 456.5,352.2 457.5,360.8 458.5,366.3 459.5,368.1 460.5,366.1 461.5,360.6 462.5,352.1 463.5,341.4 464.5,329.6 465.5,318.1 466.5,307.7 467.5,299.5 468.5,294.2 469.5,292.3 470.5,293.9 471.5,298.9 472.5,306.8 473.5,316.7 474.5,327.8 475.5,339.1 476.5,349.4 477.5,357.6 478.5,363.0 479.5,365.1 480.5,363.7 481.5,359.0 482.5,351.4 483.5,341.7 484.5,330.9 485.5,320.2 486.5,310.4 487.5,302.5 488.5,297.2 489.5,295.1 490.5,296.2 491.5,300.5 492.5,307.4 493.5,316.5 494.5,326.6 495.5,337.1 496.5,346.8 497.5,354.7 498.5,360.0 499.5,362.3 500.5,361.4 501.5,357.4 502.5,350.7 503.5,341.9 504.5,332.0 505.5,322.0 506.5,312.8 507.5,305.3 508.5,300.1 509.5,297.7 510.5,298.4 511.5,302.0 512.5,308.2 513.5,316.3 514.5,325.6 515.5,335.3 516.5,344.4 517.5,352.0 518.5,357.2 519.5,359.7 520.5,359.3 521.5,355.9 522.5,349.9 523.5,342.0 524.5,332.9 525.5,323.6 526.5,315.0 527.5,307.8 528.5,302.7 529.5,300.2 530.5,300.5 531.5,303.5 532.5,308.9 533.5,316.3 534.5,324.8 535.5,333.8 536.5,342.3 537.5,349.5 538.5,354.6 539.5,357.3 540.5,357.2 541.5,354.4 542.5,349.1 543.5,342.0 544.5,333.6 545.5,325.0 546.5,316.9 547.5,310.1 548.5,305.1 549.5,302.5 550.5,302.4 551.5,304.9 552.5,309.7 553.5,316.4 554.5,324.2 555.5,332.4 556.5,340.4 557.5,347.3 558.5,352.3 559.5,355.0 560.5,355.2 561.5,352.9 562.5,348.3 563.5,341.9 564.5,334.2 565.5,326.2 566.5,318.7 567.5,312.2 568.5,307.4 569.5,304.6 570.5,304.3 571.5,306.4 572.5,310.6 573.5,316.5 574.5,323.6 575.5,331.3 576.5,338.7 577.5,345.2 578.5,350.1 579.5,352.9 580.5,353.3 581.5,351.5 582.5,347.4 583.5,341.7 584.5,334.7 585.5,327.3 586.5,320.3 587.5,314.1 588.5,309.4 589.5,306.7 590.5,306.1 591.5,307.7 592.5,311.4 593.5,316.7 594.5,323.2 595.5,330.2 596.5,337.2 597.5,343.3 598.5,348.0 599.5,350.9 600.5,351.6 601.5,350.1 602.5,346.6 603.5,341.4 604.5,335.1 605.5,328.3 606.5,321.7 607.5,315.8 608.5,311.3 609.5,308.5 610.5,307.8 611.5,309.0 612.5,312.2 613.5,317.0 614.5,322.9 615.5,329.3 616.5,335.8 617.5,341.6 618.5,346.2 619.5,349.0 620.5,349.9 621.5,348.8 622.5,345.8 623.5,341.1 624.5,335.4 625.5,329.1 626.5,322.9 627.5,317.4 628.5,313.1 629.5,310.3 630.5,309.3 631.5,310.3 632.5,313.0 633.5,317.3 634.5,322.7 635.5,328.6 636.5,334.6 637.5,340.1 638.5,344.4 639.5,347.3 640.5,348.3 641.5,347.5 642.5,344.9 643.5,340.8 644.5,335.6 645.5,329.8 646.5,324.0 647.5,318.9 648.5,314.7 649.5,311.9 650.5,310.8 651.5,311.5 652.5,313.9 653.5,317.6 654.5,322.5 655.5,327.9 656.5,333.5 657.5,338.7 658.5,342.9 659.5,345.7 660.5,346.9 661.5,346.3 662.5,344.1 663.5,340.4 664.5,335.7 665.5,330.4 666.5,325.0 667.5,320.2 668.5,316.2 669.5,313.4 670.5,312.2 671.5,312.7 672.5,314.7 673.5,318.0 674.5,322.4 675.5,327.4 676.5,332.6 677.5,337.4 678.5,341.4 679.5,344.2 680.5,345.5 681.5,345.1 682.5,343.3 683.5,340.0 684.5,335.8 685.5,330.9 686.5,325.9 687.5,321.3 688.5,317.5 689.5,314.8 690.5,313.6 691.5,313.8 692.5,315.4 693.5,318.4 694.5,322.4 695.5,327.0 696.5,331.8 697.5,336.3 698.5,340.1 699.5,342.8 700.5,344.2 701.5,344.0 702.5,342.5 703.5,339.6 704.5,335.8 705.5,331.3 706.5,326.7 707.5,322.4 708.5,318.8 709.5,316.1 710.5,314.8 711.5,314.8 712.5,316.2 713.5,318.8 714.5,322.4 715.5,326.6 716.5,331.0 717.5,335.3 718.5,338.9 719.5,341.5 720.5,342.9 721.5,343.0 722.5,341.7 723.5,339.2 724.5,335.7 725.5,331.6 726.5,327.4 727.5,323.3 728.5,319.9 729.5,317.3 730.5,315.9 731.5,315.8 732.5,317.0 733.5,319.2 734.5,322.5 735.5,326.3 736.5,330.4 737.5,334.4 738.5,337.8 739.5,340.4 740.5,341.8 741.5,342.0 742.5,341.0 743.5,338.8 744.5,335.6 745.5,331.9 746.5,327.9 747.5,324.2 748.5,320.9 749.5,318.4 750.5,317.0 751.5,316.8 752.5,317.7 753.5,319.7 754.5,322.6 755.5,326.0 756.5,329.8 757.5,333.5 758.5,336.8 759.5,339.3 760.5,340.7 761.5,341.1 762.5,340.2 763.5,338.3 764.5,335.5 765.5,332.1 766.5,328.5 767.5,324.9 768.5,321.8 769.5,319.5 770.5,318.0 771.5,317.6 772.5,318.4 773.5,320.1 774.5,322.7 775.5,325.9 776.5,329.3 777.5,332.8 778.5,335.9 779.5,338.3 780.5,339.7 781.5,340.2 782.5,339.5 783.5,337.9 784.5,335.4 785.5,332.3 786.5,328.9 787.5,325.6 788.5,322.7 789.5,320.4 790.5,319.0 791.5,318.5 792.5,319.0 793.5,320.5 794.5,322.8 795.5,325.7 796.5,328.9 797.5,332.1 798.5,335.0 799.5,337.3 800.5,338.8 801.5,339.3 802.5,338.9 803.5,337.4 804.5,335.2 805.5,332.4 806.5,329.3 807.5,326.2 808.5,323.5 809.5,321.3 810.5,319.8 811.5,319.3 812.5,319.7 813.5,321.0 814.5,323.0 815.5,325.6 816.5,328.6 817.5,331.6 818.5,334.3 819.5,336.5 820.5,338.0 821.5,338.6 822.5,338.2 823.5,337.0 824.5,335.0 825.5,332.5 826.5,329.6 827.5,326.8 828.5,324.2 829.5,322.1 830.5,320.6 831.5,320.0 832.5,320.3 833.5,321.4 834.5,323.2 835.5,325.6 836.5,328.3 837.5,331.0 838.5,333.6 839.5,335.7 840.5,337.2 841.5,337.8 842.5,337.6 843.5,336.6 844.5,334.8 845.5,332.5 846.5,329.9 847.5,327.2 848.5,324.8 849.5,322.8 850.5,321.4 851.5,320.7 852.5,320.9 853.5,321.8 854.5,323.4 855.5,325.6 856.5,328.0 857.5,330.6 858.5,333.0 859.5,335.0 860.5,336.4 861.5,337.1 862.5,337.0 863.5,336.2 864.5,334.6 865.5,332.5 866.5,330.1 867.5,327.7 868.5,325.4 869.5,323.4 870.5,322.1 871.5,321.4 872.5,321.4 873.5,322.2 874.5,323.6 875.5,325.6 876.5,327.8 877.5,330.2 878.5,332.4 879.5,334.4 880.5,335.7 881.5,336.5 882.5,336.5 883.5,335.8 884.5,334.4 885.5,332.5 886.5,330.3 887.5,328.0 888.5,325.9 889.5,324.1 890.5,322.7 891.5,322.0 892.5,322.0 893.5,322.6 894.5,323.8 895.5,325.6 896.5,327.6 897.5,329.8 898.5,331.9 899.5,333.8 900.5,335.1 901.5,335.9 902.5,335.9 903.5,335.4 904.5,334.2 905.5,332.5 906.5,330.5 907.5,328.4 908.5,326.3 909.5,324.6 910.5,323.3 911.5,322.6 912.5,322.5 913.5,323.0 914.5,324.1 915.5,325.6 916.5,327.5 917.5,329.5 918.5,331.5 919.5,333.2 920.5,334.5 921.5,335.3 922.5,335.5 923.5,335.0 924.5,333.9 925.5,332.4 926.5,330.6 927.5,328.6 928.5,326.8 929.5,325.1 930.5,323.9 931.5,323.1 932.5,322.9 933.5,323.3 934.5,324.3 935.5,325.7 936.5,327.4 937.5,329.2 938.5,331.1 939.5,332.7 940.5,334.0 941.5,334.8 942.5,335.0 943.5,334.6 944.5,333.7 945.5,332.4 946.5,330.7 947.5,328.9 948.5,327.1 949.5,325.6 950.5,324.4 951.5,323.6 952.5,323.4 953.5,323.7 954.5,324.5 955.5,325.8 956.5,327.3 957.5,329.0 958.5,330.7 959.5,332.3 960.5,333.5 961.5,334.3 962.5,334.5 963.5,334.3 964.5,333.5 965.5,332.3 966.5,330.8 967.5,329.1 968.5,327.5 969.5,326.0 970.5,324.8 971.5,324.1 972.5,323.8 973.5,324.0 974.5,324.7 975.5,325.8 976.5,327.3 977.5,328.8 978.5,330.4 979.5,331.9 980.5,333.1 981.5,333.8 982.5,334.1 983.5,333.9 984.5,333.2 985.5,332.2 986.5,330.8 987.5,329.3 988.5,327.7 989.5,326.4 990.5,325.2 991.5,324.5 992.5,324.2 993.5,324.4 994.5,325.0 995.5,325.9 996.5,327.2 997.5,328.7 998.5,330.1 999.5,331.5 1000.5,332.6 1001.5,333.4 1002.5,333.7 1003.5,333.6 1004.5,333.0 1005.5,332.1 1006.5,330.8 1007.5,329.4 1008.5,328.0 1009.5,326.7 1010.5,325.6 1011.5,324.9 1012.5,324.6 1013.5,324.7 1014.5,325.2 1015.5,326.1 1016.5,327.2 1017.5,328.5 1018.5,329.9 1019.5,331.2 1020.5,332.3 1021.5,333.0 1022.5,333.4 1023.5,333.3 1024.5,332.8 1025.5,332.0 1026.5,330.8 1027.5,329.5 1028.5,328.2 1029.5,327.0 1030.5,326.0 1031.5,325.3 1032.5,324.9 1033.5,325.0 1034.5,325.4 1035.5,326.2 1036.5,327.2 1037.5,328.4 1038.5,329.7 1039.5,330.9 1040.5,331.9 1041.5,332.6 1042.5,333.0 1043.5,333.0 1044.5,332.6 1045.5,331.8 1046.5,330.8 1047.5,329.7 1048.5,328.4 1049.5,327.3 1050.5,326.3 1051.5,325.6 1052.5,325.2 1053.5,325.2 1054.5,325.6 1055.5,326.3 1056.5,327.2 1057.5,328.3 1058.5,329.5 1059.5,330.6 1060.5,331.6 1061.5,332.3 1062.5,332.7 1063.5,332.7 1064.5,332.4 1065.5,331.7 1066.5,330.8 1067.5,329.7 1068.5,328.6 1069.5,327.5 1070.5,326.6 1071.5,325.9 1072.5,325.5 1073.5,325.5 1074.5,325.8 1075.5,326.4 1076.5,327.2 1077.5,328.2 1078.5,329.3 1079.5,330.4 1080.5,331.3 1081.5,332.0 1082.5,332.4 1083.5,332.4 1084.5,332.2 1085.5,331.6 1086.5,330.8 1087.5,329.8 1088.5,328.8 1089.5,327.8 1090.5,326.9 1091.5,326.2 1092.5,325.8 1093.5,325.8 1094.5,326.0 1095.5,326.5 1096.5,327.3 1097.5,328.2 1098.5,329.2 1099.5,330.2 1100.5,331.0 1101.5,331.7 1102.5,332.1 1103.5,332.2 1104.5,332.0 1105.5,331.5 1106.5,330.8 1107.5,329.9 1108.5,328.9 1109.5,328.0 1110.5,327.1 1111.5,326.5 1112.5,326.1 1113.5,326.0 1114.5,326.2 1115.5,326.6 1116.5,327.3 1117.5,328.1 1118.5,329.0 1119.5,330.0 1120.5,330.8 1121.5,331.4 1122.5,331.8 1123.5,332.0 1124.5,331.8 1125.5,331.4 1126.5,330.7 1127.5,329.9 1128.5,329.0 1129.5,328.1 1130.5,327.4 1131.5,326.7 1132.5,326.4 1133.5,326.2 1134.5,326.3 1135.5,326.7 1136.5,327.3 1137.5,328.1 1138.5,328.9 1139.5,329.8 1140.5,330.6 1141.5,331.2 1142.5,331.6 1143.5,331.7 1144.5,331.6 1145.5,331.3 1146.5,330.7 1147.5,329.9 1148.5,329.1 1149.5,328.3 1150.5,327.6 1151.5,327.0 1152.5,326.6 1153.5,326.4 1154.5,326.5 1155.5,326.9 1156.5,327.4 1157.5,328.1 1158.5,328.9 1159.5,329.6 1160.5,330.4 1161.5,331.0 1162.5,331.4 1163.5,331.5 1164.5,331.5 1165.5,331.1 1166.5,330.6 1167.5,329.9 1168.5,329.2 1169.5,328.4 1170.5,327.7 1171.5,327.2 1172.5,326.8 1173.5,326.6 1174.5,326.7 1175.5,327.0 1176.5,327.4 1177.5,328.1 1178.5,328.8 1179.5,329.5 1180.5,330.2 1181.5,330.8 1182.5,331.2 1183.5,331.3 1184.5,331.3 1185.5,331.0 1186.5,330.6 1187.5,330.0 1188.5,329.3 1189.5,328.6 1190.5,327.9 1191.5,327.4 1192.5,327.0 1193.5,326.8 1194.5,326.8 1195.5,327.1 1196.5,327.5 1197.5,328.1 1198.5,328.7 1199.5,329.4 1200.5,330.0 1201.5,330.6 1202.5,331.0 1203.5,331.1 1204.5,331.1 1205.5,330.9 1206.5,330.5 1207.5,330.0 1208.5,329.3 1209.5,328.7 1210.5,328.1 1211.5,327.5 1212.5,327.2 1213.5,327.0 1214.5,327.0 1215.5,327.2 1216.5,327.6 1217.5,328.1 1218.5,328.7 1219.5,329.3 1220.5,329.9 1221.5,330.4 1222.5,330.8 1223.5,331.0 1224.5,331.0 1225.5,330.8 1226.5,330.4 1227.5,330.0 1228.5,329.4 1229.5,328.8 1230.5,328.2 1231.5,327.7 1232.5,327.3 1233.5,327.1 1234.5,327.1 1235.5,327.3 1236.5,327.6 1237.5,328.1 1238.5,328.6 1239.5,329.2 1240.5,329.8 1241.5,330.2 1242.5,330.6 1243.5,330.8 1244.5,330.8 1245.5,330.7 1246.5,330.4 1247.5,329.9 1248.5,329.4 1249.5,328.9 1250.5,328.3 1251.5,327.9 1252.5,327.5 1253.5,327.3 1254.5,327.3 1255.5,327.4 1256.5,327.7 1257.5,328.1 1258.5,328.6 1259.5,329.1 1260.5,329.6 1261.5,330.1 1262.5,330.5 1263.5,330.7 1264.5,330.7 1265.5,330.6 1266.5,330.3 1267.5,329.9 1268.5,329.4 1269.5,328.9 1270.5,328.4 1271.5,328.0 1272.5,327.6 1273.5,327.4 1274.5,327.4 1275.5,327.5 1276.5,327.7 1277.5,328.1 1278.5,328.6 1279.5,329.0 1280.5,329.5 1281.5,330.0 1282.5,330.3 1283.5,330.5 1284.5,330.6 1285.5,330.5 1286.5,330.3 1287.5,329.9 1288.5,329.5 1289.5,329.0 1290.5,328.5 1291.5,328.1 1292.5,327.8 1293.5,327.6 1294.5,327.5 1295.5,327.6 1296.5,327.8 1297.5,328.1 1298.5,328.5 1299.5,329.0 1300.5,329.4 1301.5,329.9" fill="none" stroke="#00ff00" stroke-width="1"/>
</svg>
<div class="a" style="left:0;top:0"><div class="yl" style="top:142px">1.0KV</div><div class="yl" style="top:178px">0.8KV</div><div class="yl" style="top:214px">0.6KV</div><div class="yl" style="top:249px">0.4KV</div><div class="yl" style="top:285px">0.2KV</div><div class="yl" style="top:321px">0.0KV</div><div class="yl" style="top:357px">-0.2KV</div><div class="yl" style="top:393px">-0.4KV</div><div class="yl" style="top:428px">-0.6KV</div><div class="yl" style="top:464px">-0.8KV</div><div class="yl" style="top:500px">-1.0KV</div><div class="xl" style="left:26px">0.0ms</div><div class="xl" style="left:185px">0.1ms</div><div class="xl" style="left:343px">0.2ms</div><div class="xl" style="left:502px">0.3ms</div><div class="xl" style="left:661px">0.4ms</div><div class="xl" style="left:820px">0.5ms</div><div class="xl" style="left:978px">0.6ms</div><div class="xl" style="left:1137px">0.7ms</div></div>
<div class="a" style="left:835px;top:132px;font-size:13px;letter-spacing:0.3px;font-weight:bold;color:#00ff00;white-space:pre;line-height:15px">V(n002)</div>

<!-- schematic child window -->
<div class="a" style="left:7px;top:544px;width:1300px;height:444px;background:#b9d1ea;border-top:1px solid #2b2b2b;border-left:1px solid #2b2b2b;border-radius:5px 0 0 0"></div>
<div class="a" style="left:10px;top:545px;width:1290px;height:1px;background:#f4f8fc"></div>
<div class="a" style="left:8px;top:548px;width:1px;height:439px;background:#fff"></div>
<div class="a" style="left:9px;top:546px;width:1291px;height:27px;background:linear-gradient(#93afd0,#b9d1ea)"></div>
<div class="a" style="left:14px;top:573px;width:1286px;height:1px;background:#bcd5ee"></div>
<div class="a" style="left:15px;top:574px;width:1285px;height:404px;background:#c0c0c0;border-top:1px solid #a0a0a0;border-left:1px solid #a0a0a0"></div>
<div class="a" style="left:16px;top:575px;width:1284px;height:1px;background:#696969"></div>
<div class="a" style="left:16px;top:575px;width:1px;height:403px;background:#696969"></div>
<div class="a" style="left:15px;top:978px;width:1285px;height:2px;background:#fff"></div>
<div class="a" style="left:8px;top:986px;width:1292px;height:1px;background:#2bd3ef"></div>
<div class="a" style="left:7px;top:987px;width:1293px;height:1px;background:#000"></div>
<div class="a" style="left:5px;top:988px;width:1295px;height:2px;background:#fff"></div>
<div class="a" style="left:5px;top:990px;width:1295px;height:1px;background:#9a9a9a"></div>
<div class="a" style="left:5px;top:991px;width:1295px;height:1px;background:#fff"></div>
<div class="a" style="left:5px;top:992px;width:1295px;height:4px;background:#f0eeec"></div>
<svg style="left:0;top:0" width="300" height="600"><rect x="19" y="561" width="3" height="1" fill="#0000ff"/><rect x="22" y="557" width="2" height="9" fill="#0000ff"/><rect x="28" y="554" width="1" height="1" fill="#0000ff"/><rect x="27" y="555" width="1" height="1" fill="#0000ff"/><rect x="26" y="556" width="1" height="1" fill="#0000ff"/><rect x="25" y="557" width="1" height="1" fill="#0000ff"/><rect x="24" y="558" width="1" height="1" fill="#0000ff"/><rect x="24" y="564" width="1" height="1" fill="#0000ff"/><rect x="25" y="565" width="1" height="1" fill="#0000ff"/><rect x="27" y="565" width="1" height="1" fill="#0000ff"/><rect x="26" y="566" width="2" height="1" fill="#0000ff"/><rect x="25" y="567" width="4" height="1" fill="#0000ff"/><rect x="27" y="568" width="2" height="1" fill="#0000ff"/><rect x="29" y="569" width="1" height="1" fill="#0000ff"/></svg>
<div class="a" style="left:37px;top:556px;font-size:12px;color:#000;white-space:pre;line-height:15px;transform:scaleX(0.94);transform-origin:0 0">Reihenkreis.asc</div>

<!-- schematic -->
<div class="sch" style="left:648px;top:583px;transform:scaleX(1.045);transform-origin:0 0">.tran 1000us</div><div class="sch" style="left:496px;top:643px;transform:scaleX(1.02);transform-origin:0 0">PULSE(0 1000 0 1us 1us 5us)</div><div class="sch" style="left:658px;top:655px;transform:scaleX(0.93);transform-origin:0 0">V1</div><div class="sch" style="left:946px;top:639px;transform:scaleX(1.0);transform-origin:0 0">C2</div><div class="sch" style="left:959px;top:655px;transform:scaleX(1.06);transform-origin:0 0">2000pF</div><div class="sch" style="left:912px;top:778px;transform:scaleX(0.92);transform-origin:0 0">L1</div><div class="sch" style="left:897px;top:804px;transform:scaleX(1.03);transform-origin:0 0">2mH</div><div class="sch" style="left:1035px;top:768px;transform:scaleX(1.0);transform-origin:0 0">L3</div><div class="sch" style="left:1020px;top:793px;transform:scaleX(1.03);transform-origin:0 0">2mH</div><div class="sch" style="left:1105px;top:783px;transform:scaleX(1.0);transform-origin:0 0">K L1 L3 0.5</div><svg style="left:0;top:0" width="1300" height="996"><g shape-rendering="crispEdges" stroke-width="1"><path d="M643.5,632 L643.5,664" stroke="#0000ff"/><path d="M643,632.5 L942,632.5" stroke="#0000ff"/><path d="M941.5,632 L941.5,643" stroke="#0000ff"/><path d="M941.5,643 L941.5,660" stroke="#000080"/><path d="M930,660.5 L953,660.5" stroke="#000080"/><path d="M930,665.5 L953,665.5" stroke="#000080"/><path d="M941.5,666 L941.5,683" stroke="#000080"/><path d="M941.5,683 L941.5,776" stroke="#0000ff"/><path d="M941.5,828 L941.5,961" stroke="#0000ff"/><path d="M643.5,664 L643.5,669" stroke="#000080"/><path d="M643.5,709 L643.5,713" stroke="#000080"/><path d="M643.5,713 L643.5,961" stroke="#0000ff"/><path d="M1064.5,632 L1064.5,765" stroke="#0000ff"/><path d="M1064.5,818 L1064.5,951" stroke="#0000ff"/><path d="M638,676.5 L649,676.5" stroke="#000080"/><path d="M643.5,671 L643.5,682" stroke="#000080"/><path d="M638,701.5 L649,701.5" stroke="#000080"/></g><polygon points="663.41,692.46 660.38,699.78 654.78,705.38 647.46,708.41 639.54,708.41 632.22,705.38 626.62,699.78 623.59,692.46 623.59,684.54 626.62,677.22 632.22,671.62 639.54,668.59 647.46,668.59 654.78,671.62 660.38,677.22 663.41,684.54" fill="none" stroke="#000080" stroke-width="1.1"/><path d="M941.5,776.5 H938.5 C933.5,777.0 930.5,781.5 930.5,786.5 C930.5,790.5 932.5,792.5 934.5,794.5 C932.5,796.5 930.5,798.5 930.5,802.5 C930.5,806.5 932.5,808.5 935.0,810.5 C932.5,812.5 930.5,814.5 930.5,818.5 C930.5,823.5 934.5,827.5 938.5,827.5 H941.5" fill="none" stroke="#000080" stroke-width="1.1"/><path d="M934.5,794.5 C938.5,791.0 945.5,791.0 949.0,794.5 C945.5,797.5 938.5,797.5 934.5,794.5 M935.0,810.5 C938.5,807.0 945.5,807.0 949.0,810.5 C945.5,811.5 942.5,813.5 941.5,813.5 C939.5,812.5 937.5,811.5 935.0,810.5" fill="none" stroke="#000080" stroke-width="1.1"/><circle cx="945.5" cy="783.7" r="2.2" fill="none" stroke="#000080" stroke-width="1"/><path d="M1064.5,765.5 H1061.5 C1056.5,766.0 1053.5,770.5 1053.5,775.5 C1053.5,779.5 1055.5,781.5 1057.5,783.5 C1055.5,785.5 1053.5,787.5 1053.5,791.5 C1053.5,795.5 1055.5,797.5 1058.0,799.5 C1055.5,801.5 1053.5,803.5 1053.5,807.5 C1053.5,812.5 1057.5,816.5 1061.5,816.5 H1064.5" fill="none" stroke="#000080" stroke-width="1.1"/><path d="M1057.5,783.5 C1061.5,780.0 1068.5,780.0 1072.0,783.5 C1068.5,786.5 1061.5,786.5 1057.5,783.5 M1058.0,799.5 C1061.5,796.0 1068.5,796.0 1072.0,799.5 C1068.5,800.5 1065.5,802.5 1064.5,802.5 C1062.5,801.5 1060.5,800.5 1058.0,799.5" fill="none" stroke="#000080" stroke-width="1.1"/><circle cx="1068.5" cy="772.7" r="2.2" fill="none" stroke="#000080" stroke-width="1"/><path d="M631.5,960.5 H655.5 L643.5,972.5 Z" fill="none" stroke="#0000ff" stroke-width="1.1"/><path d="M929.5,960.5 H953.5 L941.5,972.5 Z" fill="none" stroke="#0000ff" stroke-width="1.1"/><path d="M1052.5,950.5 H1076.5 L1064.5,962.5 Z" fill="none" stroke="#0000ff" stroke-width="1.1"/></svg>
</body></html>
